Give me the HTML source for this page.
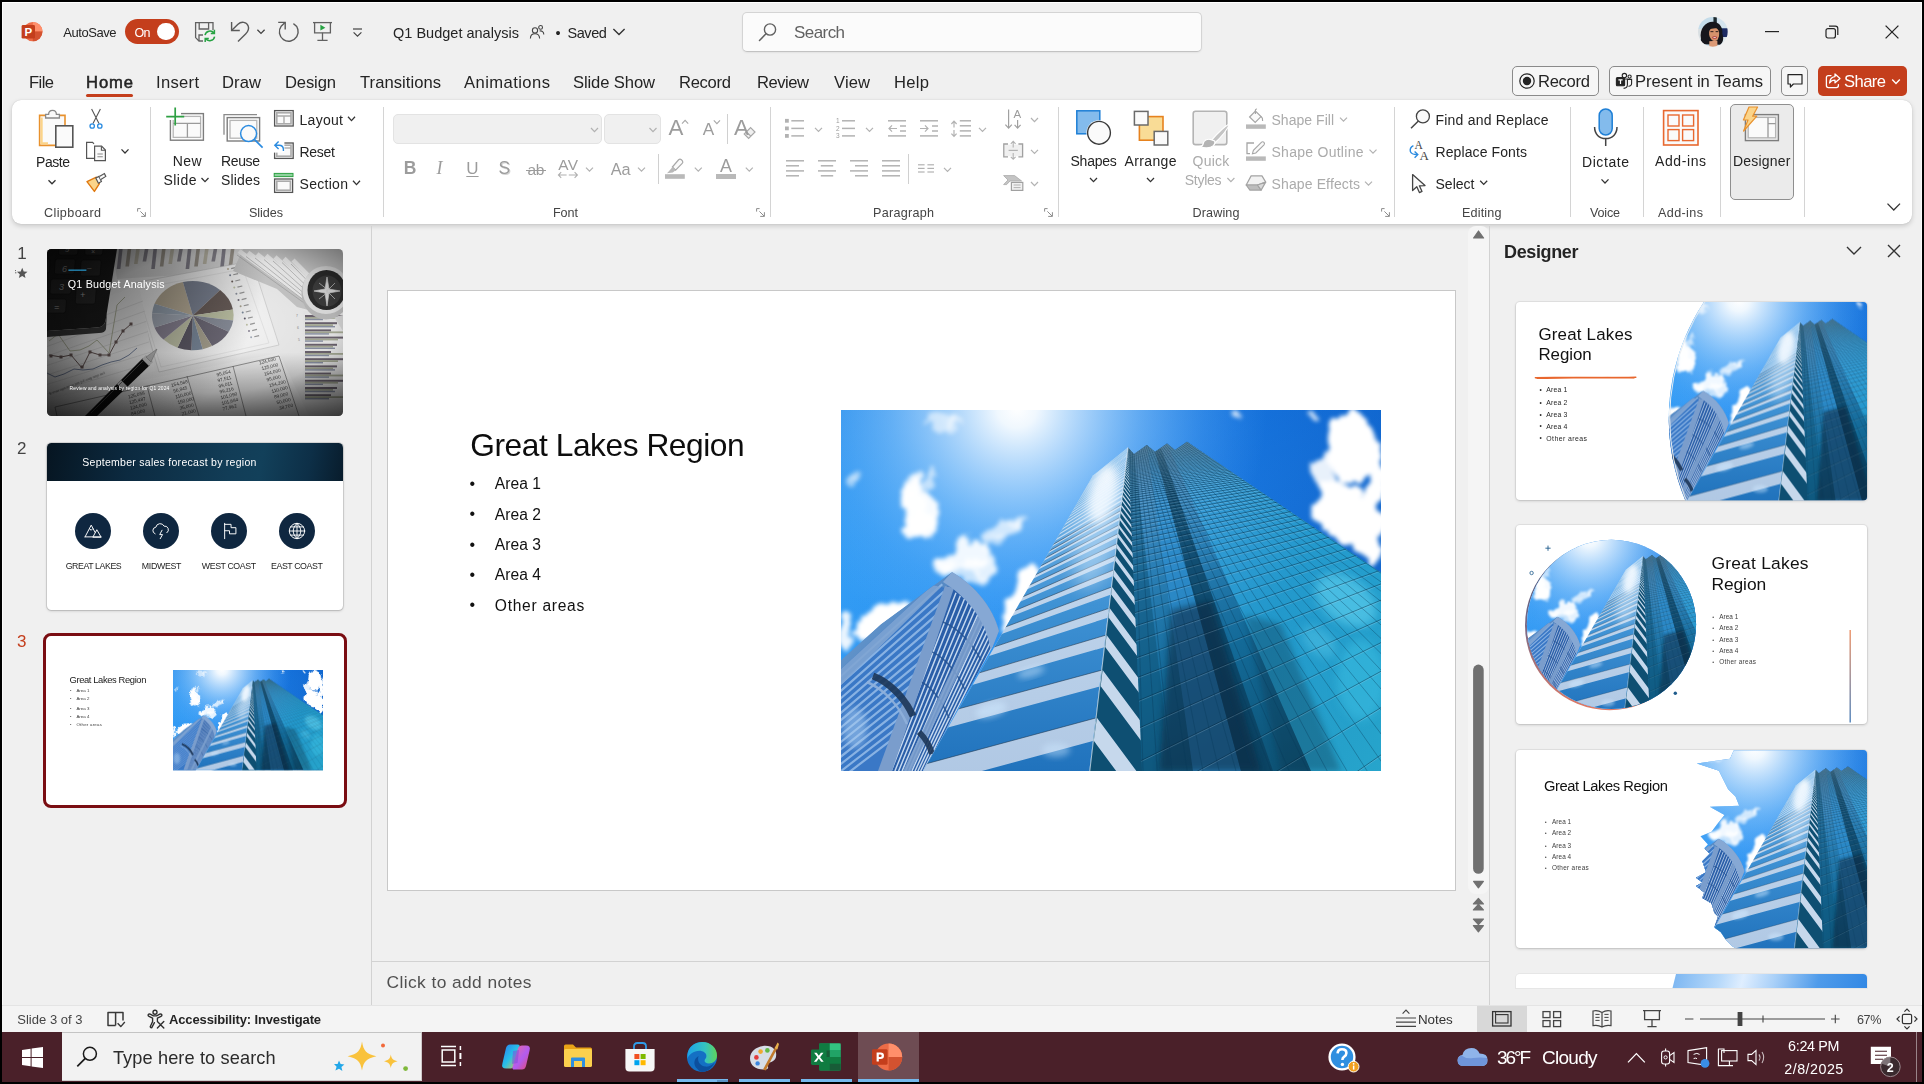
<!DOCTYPE html>
<html lang="en"><head><meta charset="utf-8"><title>Q1 Budget analysis - PowerPoint</title>
<style>
*{box-sizing:border-box;margin:0;padding:0}
html,body{width:1924px;height:1084px;overflow:hidden;background:#000}
body{font-family:"Liberation Sans",sans-serif;color:#242424;position:relative}
#app{position:absolute;left:2px;top:2px;width:1920px;height:1080px;background:#f0f0f0;overflow:hidden}
#root{position:absolute;left:-2px;top:-2px;width:1924px;height:1084px}
.a{position:absolute}
.t{position:absolute;white-space:nowrap;line-height:1;}
svg{position:absolute;overflow:visible}
.sep{position:absolute;width:1px;background:#d6d6d6}
.dis{color:#a6a6a6}
</style></head><body>
<div id="app"><div id="root">
<!-- photo symbol -->
<svg width="0" height="0" style="position:absolute;left:0;top:0"><defs>
<linearGradient id="pSky" x1="0" y1="0" x2="1" y2="0.25"><stop offset="0" stop-color="#36a0f6"/><stop offset="0.45" stop-color="#2890f0"/><stop offset="0.7" stop-color="#1a78e0"/><stop offset="1" stop-color="#1266cc"/></linearGradient>
<linearGradient id="pSkyV" x1="0" y1="0" x2="0" y2="1"><stop offset="0" stop-color="#0a62d0" stop-opacity=".28"/><stop offset=".5" stop-color="#1f86e8" stop-opacity="0"/><stop offset="1" stop-color="#7cc4ff" stop-opacity=".35"/></linearGradient>
<radialGradient id="pSun" cx="176" cy="-2" r="250" gradientUnits="userSpaceOnUse"><stop offset="0" stop-color="#fff" stop-opacity="1"/><stop offset=".08" stop-color="#f6fbff" stop-opacity=".97"/><stop offset=".25" stop-color="#cfe8ff" stop-opacity=".8"/><stop offset=".5" stop-color="#9fd2ff" stop-opacity=".5"/><stop offset=".75" stop-color="#7cc0ff" stop-opacity=".22"/><stop offset="1" stop-color="#6bb8ff" stop-opacity="0"/></radialGradient>
<filter id="pCl" x="-30%" y="-30%" width="160%" height="160%"><feTurbulence type="fractalNoise" baseFrequency="0.045" numOctaves="3" seed="7" result="n"/><feDisplacementMap in="SourceGraphic" in2="n" scale="26" xChannelSelector="R" yChannelSelector="G"/><feGaussianBlur stdDeviation="2"/></filter>
<linearGradient id="pLeftGlass" x1="0" y1="0" x2="0" y2="1"><stop offset="0" stop-color="#8fc4ee"/><stop offset=".3" stop-color="#3f92d4"/><stop offset=".65" stop-color="#1d6fba"/><stop offset="1" stop-color="#1a62a8"/></linearGradient>
<linearGradient id="pLeftWhite" x1="0" y1="0" x2="0" y2="1"><stop offset="0" stop-color="#cfe6fa"/><stop offset=".5" stop-color="#bcd2ea"/><stop offset="1" stop-color="#b0c8e4"/></linearGradient>
<linearGradient id="pRight" x1="0.2" y1="0" x2="0.75" y2="1"><stop offset="0" stop-color="#4f93c8"/><stop offset=".3" stop-color="#2a7fb6"/><stop offset=".6" stop-color="#136a98"/><stop offset="1" stop-color="#0c4f70"/></linearGradient>
<linearGradient id="pRightLite" x1="0" y1="0" x2="1" y2="1"><stop offset="0" stop-color="#3f9fe0"/><stop offset=".5" stop-color="#25a0d4"/><stop offset="1" stop-color="#2bb4dc"/></linearGradient>
<linearGradient id="pLB" x1="0" y1="0" x2="1" y2="1"><stop offset="0" stop-color="#6f9fd0"/><stop offset=".5" stop-color="#4d82c0"/><stop offset="1" stop-color="#2f64a6"/></linearGradient>
<filter id="pB3" x="-30%" y="-30%" width="160%" height="160%"><feGaussianBlur stdDeviation="3"/></filter>
<filter id="pB5" x="-30%" y="-30%" width="160%" height="160%"><feGaussianBlur stdDeviation="5"/></filter>
<filter id="pB8" x="-40%" y="-40%" width="180%" height="180%"><feGaussianBlur stdDeviation="9"/></filter>
<clipPath id="pClip"><rect width="540" height="361"/></clipPath>
<clipPath id="pLF"><path d="M252.0 65.6 L287.0 37.5 L248.3 361.0 L82.0 361.0 Z"/></clipPath>
<clipPath id="pRF"><path d="M287 37.5 L293 44 L305.8 35 L314 41.7 L326 33.4 L334 40 L346 31.7 L540 162.5 L540 361 L248.3 361 Z"/></clipPath>
<clipPath id="pLBc"><path d="M0 250 L40 214 L111 162 C135 176 152 198 158 221 L152 236 L82 361 L0 361 Z"/></clipPath>
</defs>
<symbol id="ph" viewBox="0 0 540 361" preserveAspectRatio="none"><g clip-path="url(#pClip)">
<rect width="540" height="361" fill="url(#pSky)"/><rect width="540" height="361" fill="url(#pSkyV)"/><rect width="540" height="361" fill="url(#pSun)"/>
<g filter="url(#pCl)"><ellipse cx="78" cy="100" rx="17" ry="30" fill="#fff" opacity="0.95" transform="rotate(-8 78 100)"/><ellipse cx="80" cy="118" rx="17" ry="13" fill="#fff" opacity="0.95" transform="rotate(0 80 118)"/><ellipse cx="74" cy="76" rx="9" ry="11" fill="#fff" opacity="0.8" transform="rotate(0 74 76)"/><ellipse cx="90" cy="70" rx="6" ry="8" fill="#fff" opacity="0.6" transform="rotate(0 90 70)"/><ellipse cx="70" cy="96" rx="12" ry="16" fill="#fff" opacity="0.9" transform="rotate(0 70 96)"/><ellipse cx="122" cy="148" rx="28" ry="14" fill="#fff" opacity="0.92" transform="rotate(-22 122 148)"/><ellipse cx="104" cy="160" rx="12" ry="10" fill="#fff" opacity="0.85" transform="rotate(0 104 160)"/><ellipse cx="140" cy="156" rx="14" ry="9" fill="#fff" opacity="0.85" transform="rotate(-10 140 156)"/><ellipse cx="128" cy="166" rx="14" ry="6" fill="#fff" opacity="0.7" transform="rotate(0 128 166)"/><ellipse cx="160" cy="120" rx="22" ry="7" fill="#fff" opacity="0.7" transform="rotate(-22 160 120)"/><ellipse cx="176" cy="112" rx="9" ry="7" fill="#fff" opacity="0.65" transform="rotate(0 176 112)"/><ellipse cx="150" cy="132" rx="12" ry="5" fill="#fff" opacity="0.55" transform="rotate(-25 150 132)"/><ellipse cx="98" cy="12" rx="16" ry="7" fill="#fff" opacity="0.55" transform="rotate(10 98 12)"/><ellipse cx="110" cy="18" rx="6" ry="8" fill="#fff" opacity="0.45" transform="rotate(0 110 18)"/><ellipse cx="12" cy="74" rx="5" ry="8" fill="#fff" opacity="0.5" transform="rotate(0 12 74)"/><ellipse cx="16" cy="68" rx="3" ry="4" fill="#fff" opacity="0.5" transform="rotate(0 16 68)"/><ellipse cx="186" cy="172" rx="11" ry="14" fill="#fff" opacity="1" transform="rotate(20 186 172)"/><ellipse cx="176" cy="196" rx="13" ry="20" fill="#fff" opacity="1" transform="rotate(20 176 196)"/><ellipse cx="168" cy="214" rx="10" ry="10" fill="#fff" opacity="1" transform="rotate(0 168 214)"/><ellipse cx="44" cy="206" rx="24" ry="12" fill="#fff" opacity="1" transform="rotate(-25 44 206)"/><ellipse cx="26" cy="222" rx="16" ry="12" fill="#fff" opacity="1" transform="rotate(-25 26 222)"/><ellipse cx="3" cy="224" rx="6" ry="18" fill="#fff" opacity="0.9" transform="rotate(0 3 224)"/><ellipse cx="64" cy="196" rx="8" ry="6" fill="#fff" opacity="0.8" transform="rotate(0 64 196)"/><ellipse cx="396" cy="5" rx="8" ry="4" fill="#fff" opacity="0.8" transform="rotate(0 396 5)"/><ellipse cx="472" cy="8" rx="7" ry="4" fill="#fff" opacity="0.8" transform="rotate(0 472 8)"/><ellipse cx="510" cy="36" rx="24" ry="38" fill="#fff" opacity="1" transform="rotate(0 510 36)"/><ellipse cx="498" cy="104" rx="24" ry="34" fill="#fff" opacity="1" transform="rotate(-15 498 104)"/><ellipse cx="527" cy="118" rx="16" ry="40" fill="#fff" opacity="1" transform="rotate(0 527 118)"/><ellipse cx="484" cy="70" rx="9" ry="28" fill="#fff" opacity="0.9" transform="rotate(0 484 70)"/><ellipse cx="536" cy="60" rx="10" ry="30" fill="#fff" opacity="1" transform="rotate(0 536 60)"/></g>
<g clip-path="url(#pLBc)"><path d="M0 250 L40 214 L111 162 C135 176 152 198 158 221 L152 236 L82 361 L0 361 Z" fill="url(#pLB)"/>
<path d="M0 259 L91.5 175 L109 179 L42.8 361 L0 361 Z" fill="#3a78c6"/>
<path d="M-10.0 275.2 L101.3 174.3 M-10.0 282.4 L102.6 181.7 M-10.0 289.6 L103.9 189.0 M-10.0 296.8 L105.2 196.4 M-10.0 304.0 L106.5 203.7 M-10.0 311.2 L107.8 211.1 M-10.0 318.4 L109.1 218.4 M-10.0 325.6 L110.4 225.8 M-10.0 332.8 L111.7 233.1 M-10.0 340.0 L113.0 240.4 M-10.0 347.2 L114.3 247.8 M-10.0 354.4 L115.6 255.1 M-10.0 361.6 L116.8 262.5 M-10.0 368.8 L118.1 269.8 M-10.0 376.0 L119.4 277.2" stroke="#9cc0ea" stroke-width="2.2" opacity=".8" fill="none"/>
<path d="M0 259 L91.5 175 L100 177 L0 275 Z" fill="#7fa4d2" opacity=".9"/>
<path d="M106 176 C132 186 148 210 152 236 L82 361 L44 361 Z" fill="#2a5ea8"/>
<path d="M110.6 179.8 L42.6 361 M115.0 182.8 L46.4 361 M119.3 185.8 L50.2 361 M123.4 189.0 L53.9 361 M127.2 192.3 L57.6 361 M130.9 195.8 L61.1 361 M134.2 199.5 L64.5 361 M137.3 203.4 L67.8 361 M140.0 207.5 L70.9 361 M142.5 211.9 L74.0 361 M144.7 216.4 L76.9 361 M146.6 221.1 L79.7 361 M148.3 226.0 L82.5 361 M149.9 231.0 L85.3 361 M151.4 236.0 L88.1 361" stroke="#d4e4f6" stroke-width="1.5" opacity=".9" fill="none"/>
<path d="M96 210 C112 214 128 228 140 250 M86 240 C100 244 114 258 124 280 M76 270 C88 274 100 288 108 308" stroke="#23508f" stroke-width="1.6" fill="none" opacity=".8"/>
<path d="M104 176 L113 178 L51 361 L37 361 Z" fill="#7a9dcc"/>
<path d="M138 204 L144 210 L70 361 L62 361 Z" fill="#7a9dcc" opacity=".9"/>
<path d="M32 266 C48 272 64 288 72 306" stroke="#1d3658" stroke-width="7" fill="none" opacity=".9"/>
<path d="M78 322 C84 328 89 336 91 344" stroke="#1d3658" stroke-width="6" fill="none" opacity=".9"/>
<path d="M26 272 C44 280 58 296 66 314" stroke="#8fb0da" stroke-width="2.5" fill="none" opacity=".9"/>
<ellipse cx="14" cy="318" rx="12" ry="20" fill="#a9cdf2" opacity=".5" filter="url(#pB3)"/>
<path d="M112 161 C138 174 154 198 159 222 L150 242 C147 216 131 190 102 172 Z" fill="#86a8d4"/>
</g>
<g clip-path="url(#pLF)"><rect x="60" y="30" width="240" height="340" fill="url(#pLeftWhite)"/>
<path d="M241.9 411.8 L-12.0 480.4 L-60.3 564.2 L232.1 485.3 Z M252.8 330.8 L41.2 387.9 L11.0 440.4 L246.7 376.8 Z M259.7 276.2 L77.1 325.6 L56.3 361.6 L255.9 307.7 Z M264.2 237.0 L101.6 283.3 L87.8 306.9 L261.6 259.9 Z M267.6 207.5 L118.3 255.5 L108.6 271.7 L265.6 224.9 Z M270.2 184.4 L130.9 234.7 L123.4 247.0 L268.6 198.1 Z M272.3 165.9 L141.1 218.1 L135.0 228.0 L271.1 176.9 Z M274.1 150.7 L149.5 204.5 L144.5 212.7 L273.0 159.8 Z M275.5 138.0 L156.7 193.0 L152.4 199.9 L274.6 145.6 Z M276.7 127.3 L162.9 183.1 L159.1 189.1 L276.0 133.7 Z M277.8 118.0 L168.3 174.4 L165.0 179.6 L277.2 123.6 Z M278.7 110.0 L173.1 166.7 L170.2 171.4 L278.1 114.9 Z M279.5 103.0 L177.3 159.9 L174.7 164.1 L279.0 107.3 Z M280.2 96.8 L181.2 153.8 L178.9 157.5 L279.8 100.6 Z M280.8 91.3 L184.7 148.2 L182.6 151.6 L280.5 94.7 Z M281.4 86.4 L187.9 143.1 L185.9 146.2 L281.1 89.4 Z M281.9 81.9 L190.8 138.5 L189.0 141.3 L281.6 84.6 Z M282.4 77.9 L193.5 134.2 L191.8 136.8 L282.1 80.4 Z M282.8 74.3 L195.9 130.2 L194.4 132.6 L282.5 76.5 Z M283.2 70.9 L198.2 126.6 L196.8 128.8 L282.9 73.0 Z M283.5 67.9 L200.4 123.2 L199.1 125.2 L283.3 69.7 Z M283.9 65.0 L202.3 120.0 L201.1 121.9 L283.7 66.8 Z M284.1 62.4 L204.2 117.0 L203.1 118.8 L284.0 64.0 Z M284.4 60.0 L205.9 114.2 L204.9 115.9 L284.3 61.5 Z M284.7 57.8 L207.6 111.6 L206.6 113.2 L284.5 59.1 Z M284.9 55.7 L209.1 109.1 L208.2 110.7 L284.8 57.0 Z M285.1 53.7 L210.6 106.8 L209.7 108.3 L285.0 54.9 Z M285.4 51.9 L211.9 104.6 L211.1 106.0 L285.2 53.0 Z M285.5 50.2 L213.2 102.6 L212.4 103.8 L285.4 51.3 Z M285.7 48.6 L214.5 100.6 L213.7 101.8 L285.6 49.6 Z M285.9 47.1 L215.6 98.7 L214.9 99.9 L285.8 48.0 Z M286.1 45.7 L216.7 96.9 L216.1 98.0 L286.0 46.5 Z M286.2 44.3 L217.8 95.2 L217.1 96.3 L286.1 45.1 Z M286.4 43.0 L218.8 93.6 L218.2 94.6 L286.3 43.8 Z M286.5 41.8 L219.8 92.1 L219.2 93.0 L286.4 42.6 Z M286.6 40.7 L220.7 90.6 L220.1 91.5 L286.6 41.4 Z M286.8 39.6 L221.5 89.2 L221.0 90.1 L286.7 40.3 Z M286.9 38.6 L222.4 87.9 L221.9 88.7 L286.8 39.2 Z M287.0 37.6 L223.2 86.6 L222.7 87.4 L286.9 38.2 Z M287.1 36.6 L224.0 85.3 L223.5 86.1 L287.0 37.2 Z M287.2 35.7 L224.7 84.1 L224.2 84.9 L287.1 36.3 Z" fill="url(#pLeftGlass)"/>
<path d="M232.1 485.3 L-60.3 564.2 M246.7 376.8 L11.0 440.4 M255.9 307.7 L56.3 361.6 M261.6 259.9 L87.8 306.9 M265.6 224.9 L108.6 271.7 M268.6 198.1 L123.4 247.0 M271.1 176.9 L135.0 228.0 M273.0 159.8 L144.5 212.7 M274.6 145.6 L152.4 199.9 M276.0 133.7 L159.1 189.1 M277.2 123.6 L165.0 179.6 M278.1 114.9 L170.2 171.4 M279.0 107.3 L174.7 164.1 M279.8 100.6 L178.9 157.5 M280.5 94.7 L182.6 151.6" stroke="#22384e" stroke-width=".8" opacity=".7" fill="none"/>
<ellipse cx="150" cy="300" rx="16" ry="7" fill="#cfe8ff" opacity=".55" filter="url(#pB3)" transform="rotate(-16 150 300)"/><ellipse cx="190" cy="262" rx="14" ry="5" fill="#cfe8ff" opacity=".5" filter="url(#pB3)" transform="rotate(-16 190 262)"/><ellipse cx="215" cy="340" rx="14" ry="7" fill="#cfe8ff" opacity=".45" filter="url(#pB3)"/>
<ellipse cx="262" cy="84" rx="13" ry="30" fill="#fff" opacity=".9" filter="url(#pB5)" transform="rotate(14 262 84)"/>
<ellipse cx="258" cy="120" rx="22" ry="60" fill="#dff0ff" opacity=".45" filter="url(#pB8)" transform="rotate(14 258 120)"/>
</g>
<g clip-path="url(#pRF)"><path d="M287 37.5 L293 44 L305.8 35 L314 41.7 L326 33.4 L334 40 L346 31.7 L540 162.5 L540 361 L248.3 361 Z" fill="url(#pRight)"/>
<path d="M326 33.4 L334 40 L346 31.7 L540 162.5 L540 361 L470 361 Z" fill="url(#pRightLite)" opacity=".85"/>
<path d="M305.8 35 L314 41.7 L400 361 L352 361 Z" fill="#2d8fd0" opacity=".7"/>
<path d="M314 41.7 L320 38 L432 361 L400 361 Z" fill="#0b3f5e" opacity=".75"/>
<path d="M287 37.5 L293 44 L330 361 L248.8 361 Z" fill="#0f5478" opacity=".55"/>
<path d="M330 200 L370 190 L420 361 L318 361 Z" fill="#07283c" opacity=".55" filter="url(#pB3)"/>
<path d="M404 205 L440 214 L500 361 L440 361 Z" fill="#0a3048" opacity=".35" filter="url(#pB3)"/>
<ellipse cx="505" cy="190" rx="34" ry="22" fill="#62d2f0" opacity=".6" filter="url(#pB5)" transform="rotate(35 505 190)"/><ellipse cx="520" cy="270" rx="24" ry="40" fill="#3cc0e4" opacity=".5" filter="url(#pB5)"/><ellipse cx="478" cy="232" rx="20" ry="12" fill="#58c8ea" opacity=".45" filter="url(#pB5)" transform="rotate(40 478 232)"/>
<path d="M205.8 680.6 L545.0 405.0 M221.1 566.7 L545.0 341.4 M232.1 485.3 L545.0 294.6 M240.3 424.2 L545.0 258.6 M246.7 376.8 L545.0 230.2 M251.8 338.8 L545.0 207.2 M255.9 307.7 L545.0 188.1 M259.0 281.8 L545.0 172.0 M261.6 259.9 L545.0 158.2 M263.7 241.1 L545.0 146.3 M265.6 224.9 L545.0 136.0 M267.2 210.6 L545.0 126.9 M268.6 198.1 L545.0 118.9 M269.9 186.9 L545.0 111.7 M271.1 176.9 L545.0 105.3 M272.1 167.9 L545.0 99.4 M273.0 159.8 L545.0 94.2 M273.9 152.4 L545.0 89.4 M274.6 145.6 L545.0 85.0 M275.3 139.4 L545.0 80.9 M276.0 133.7 L545.0 77.2 M276.6 128.5 L545.0 73.8 M277.2 123.6 L545.0 70.6 M277.7 119.1 L545.0 67.6 M278.1 114.9 L545.0 64.9 M278.6 110.9 L545.0 62.3 M279.0 107.3 L545.0 59.9 M279.4 103.8 L545.0 57.6 M279.8 100.6 L545.0 55.5 M280.1 97.5 L545.0 53.5 M280.5 94.7 L545.0 51.6 M280.8 91.9 L545.0 49.8 M281.1 89.4 L545.0 48.1 M281.3 86.9 L545.0 46.5 M281.6 84.6 L545.0 45.0 M281.9 82.5 L545.0 43.5 M282.1 80.4 L545.0 42.1 M282.3 78.4 L545.0 40.8 M282.5 76.5 L545.0 39.6 M282.7 74.7 L545.0 38.4 M282.9 73.0 L545.0 37.2 M283.1 71.3 L545.0 36.1 M283.3 69.7 L545.0 35.1 M283.5 68.2 L545.0 34.1 M283.7 66.8 L545.0 33.1 M283.8 65.4 L545.0 32.2 M284.0 64.0 L545.0 31.3 M284.1 62.7 L545.0 30.4 M284.3 61.5 L545.0 29.6 M284.4 60.3 L545.0 28.8 M284.5 59.1 L545.0 28.0 M284.7 58.0 L545.0 27.3 M284.8 57.0 L545.0 26.6 M284.9 55.9 L545.0 25.9 M285.0 54.9 L545.0 25.2 M285.1 54.0 L545.0 24.6 M285.2 53.0 L545.0 23.9 M285.3 52.1 L545.0 23.3 M285.4 51.3 L545.0 22.7 M285.5 50.4 L545.0 22.2 M285.6 49.6 L545.0 21.6 M285.7 48.8 L545.0 21.1 M285.8 48.0 L545.0 20.6 M285.9 47.3 L545.0 20.1 M286.0 46.5 L545.0 19.6 M286.0 45.8 L545.0 19.1 M286.1 45.1 L545.0 18.7 M286.2 44.5 L545.0 18.2 M286.3 43.8 L545.0 17.8 M286.3 43.2 L545.0 17.3 M286.4 42.6 L545.0 16.9 M286.5 42.0 L545.0 16.5 M286.6 41.4 L545.0 16.1 M286.6 40.8 L545.0 15.8 M286.7 40.3 L545.0 15.4 M286.7 39.7 L545.0 15.0 M286.8 39.2 L545.0 14.7 M286.9 38.7 L545.0 14.3 M286.9 38.2 L545.0 14.0 M287.0 37.7 L545.0 13.7 M287.0 37.2 L545.0 13.3 M287.1 36.7 L545.0 13.0 M287.1 36.3 L545.0 12.7" stroke="#06283e" stroke-width=".9" opacity=".5" fill="none"/>
<path d="M205.8 681.6 L545.0 406.0 M221.1 567.7 L545.0 342.4 M232.1 486.3 L545.0 295.6 M240.3 425.2 L545.0 259.6 M246.7 377.8 L545.0 231.2 M251.8 339.8 L545.0 208.2 M255.9 308.7 L545.0 189.1 M259.0 282.8 L545.0 173.0 M261.6 260.9 L545.0 159.2 M263.7 242.1 L545.0 147.3 M265.6 225.9 L545.0 137.0 M267.2 211.6 L545.0 127.9 M268.6 199.1 L545.0 119.9 M269.9 187.9 L545.0 112.7 M271.1 177.9 L545.0 106.3 M272.1 168.9 L545.0 100.4 M273.0 160.8 L545.0 95.2 M273.9 153.4 L545.0 90.4 M274.6 146.6 L545.0 86.0 M275.3 140.4 L545.0 81.9 M276.0 134.7 L545.0 78.2 M276.6 129.5 L545.0 74.8 M277.2 124.6 L545.0 71.6 M277.7 120.1 L545.0 68.6 M278.1 115.9 L545.0 65.9 M278.6 111.9 L545.0 63.3 M279.0 108.3 L545.0 60.9 M279.4 104.8 L545.0 58.6 M279.8 101.6 L545.0 56.5 M280.1 98.5 L545.0 54.5 M280.5 95.7 L545.0 52.6 M280.8 92.9 L545.0 50.8 M281.1 90.4 L545.0 49.1 M281.3 87.9 L545.0 47.5 M281.6 85.6 L545.0 46.0 M281.9 83.5 L545.0 44.5 M282.1 81.4 L545.0 43.1 M282.3 79.4 L545.0 41.8 M282.5 77.5 L545.0 40.6 M282.7 75.7 L545.0 39.4 M282.9 74.0 L545.0 38.2 M283.1 72.3 L545.0 37.1 M283.3 70.7 L545.0 36.1 M283.5 69.2 L545.0 35.1 M283.7 67.8 L545.0 34.1 M283.8 66.4 L545.0 33.2 M284.0 65.0 L545.0 32.3 M284.1 63.7 L545.0 31.4 M284.3 62.5 L545.0 30.6 M284.4 61.3 L545.0 29.8 M284.5 60.1 L545.0 29.0 M284.7 59.0 L545.0 28.3 M284.8 58.0 L545.0 27.6 M284.9 56.9 L545.0 26.9 M285.0 55.9 L545.0 26.2 M285.1 55.0 L545.0 25.6 M285.2 54.0 L545.0 24.9 M285.3 53.1 L545.0 24.3 M285.4 52.3 L545.0 23.7 M285.5 51.4 L545.0 23.2 M285.6 50.6 L545.0 22.6 M285.7 49.8 L545.0 22.1 M285.8 49.0 L545.0 21.6 M285.9 48.3 L545.0 21.1 M286.0 47.5 L545.0 20.6 M286.0 46.8 L545.0 20.1 M286.1 46.1 L545.0 19.7 M286.2 45.5 L545.0 19.2 M286.3 44.8 L545.0 18.8 M286.3 44.2 L545.0 18.3 M286.4 43.6 L545.0 17.9 M286.5 43.0 L545.0 17.5 M286.6 42.4 L545.0 17.1 M286.6 41.8 L545.0 16.8 M286.7 41.3 L545.0 16.4 M286.7 40.7 L545.0 16.0 M286.8 40.2 L545.0 15.7 M286.9 39.7 L545.0 15.3 M286.9 39.2 L545.0 15.0 M287.0 38.7 L545.0 14.7 M287.0 38.2 L545.0 14.3 M287.1 37.7 L545.0 14.0 M287.1 37.3 L545.0 13.7" stroke="#bfe4f4" stroke-width=".6" opacity=".35" fill="none"/>
<path d="M292 -3 L250.0 361 M292 -3 L262.2 361 M292 -3 L275.0 361 M292 -3 L288.2 361 M292 -3 L302.0 361 M292 -3 L316.2 361 M292 -3 L331.0 361 M292 -3 L346.2 361 M292 -3 L362.0 361 M292 -3 L378.2 361 M292 -3 L395.0 361 M292 -3 L412.2 361 M292 -3 L430.0 361 M292 -3 L448.2 361 M292 -3 L467.0 361 M292 -3 L486.2 361 M292 -3 L506.0 361 M292 -3 L526.2 361 M292 -3 L547.0 361 M292 -3 L568.2 361 M292 -3 L590.0 361 M292 -3 L612.2 361 M292 -3 L635.0 361 M292 -3 L658.2 361 M292 -3 L682.0 361 M292 -3 L706.2 361 M292 -3 L731.0 361 M292 -3 L756.2 361 M292 -3 L782.0 361 M292 -3 L808.2 361 M292 -3 L835.0 361 M292 -3 L862.2 361 M292 -3 L890.0 361 M292 -3 L918.2 361" stroke="#0a3a58" stroke-width=".7" opacity=".5" fill="none"/>
<clipPath id="pFc"><path d="M287 37.5 L248.3 361 L301 361 Z"/></clipPath>
<g clip-path="url(#pFc)"><path d="M287 37.5 L248.3 361 L301 361 Z" fill="#0e4f72"/>
<path d="M246.7 376.8 L241.9 411.8 L301.9 492.8 L306.7 457.8 Z M255.9 307.7 L252.8 330.8 L312.8 411.8 L315.9 388.7 Z M261.6 259.9 L259.7 276.2 L319.7 357.2 L321.6 340.9 Z M265.6 224.9 L264.2 237.0 L324.2 318.0 L325.6 305.9 Z M268.6 198.1 L267.6 207.5 L327.6 288.5 L328.6 279.1 Z M271.1 176.9 L270.2 184.4 L330.2 265.4 L331.1 257.9 Z M273.0 159.8 L272.3 165.9 L332.3 246.9 L333.0 240.8 Z M274.6 145.6 L274.1 150.7 L334.1 231.7 L334.6 226.6 Z M276.0 133.7 L275.5 138.0 L335.5 219.0 L336.0 214.7 Z M277.2 123.6 L276.7 127.3 L336.7 208.3 L337.2 204.6 Z M278.1 114.9 L277.8 118.0 L337.8 199.0 L338.1 195.9 Z M279.0 107.3 L278.7 110.0 L338.7 191.0 L339.0 188.3 Z M279.8 100.6 L279.5 103.0 L339.5 184.0 L339.8 181.6 Z M280.5 94.7 L280.2 96.8 L340.2 177.8 L340.5 175.7 Z M281.1 89.4 L280.8 91.3 L340.8 172.3 L341.1 170.4 Z M281.6 84.6 L281.4 86.4 L341.4 167.4 L341.6 165.6 Z M282.1 80.4 L281.9 81.9 L341.9 162.9 L342.1 161.4 Z M282.5 76.5 L282.4 77.9 L342.4 158.9 L342.5 157.5 Z M282.9 73.0 L282.8 74.3 L342.8 155.3 L342.9 154.0 Z M283.3 69.7 L283.2 70.9 L343.2 151.9 L343.3 150.7 Z M283.7 66.8 L283.5 67.9 L343.5 148.9 L343.7 147.8 Z M284.0 64.0 L283.9 65.0 L343.9 146.0 L344.0 145.0 Z M284.3 61.5 L284.1 62.4 L344.1 143.4 L344.3 142.5 Z M284.5 59.1 L284.4 60.0 L344.4 141.0 L344.5 140.1 Z M284.8 57.0 L284.7 57.8 L344.7 138.8 L344.8 138.0 Z M285.0 54.9 L284.9 55.7 L344.9 136.7 L345.0 135.9 Z M285.2 53.0 L285.1 53.7 L345.1 134.7 L345.2 134.0 Z M285.4 51.3 L285.4 51.9 L345.4 132.9 L345.4 132.3 Z M285.6 49.6 L285.5 50.2 L345.5 131.2 L345.6 130.6 Z M285.8 48.0 L285.7 48.6 L345.7 129.6 L345.8 129.0 Z M286.0 46.5 L285.9 47.1 L345.9 128.1 L346.0 127.5 Z M286.1 45.1 L286.1 45.7 L346.1 126.7 L346.1 126.1 Z M286.3 43.8 L286.2 44.3 L346.2 125.3 L346.3 124.8 Z M286.4 42.6 L286.4 43.0 L346.4 124.0 L346.4 123.6 Z M286.6 41.4 L286.5 41.8 L346.5 122.8 L346.6 122.4 Z M286.7 40.3 L286.6 40.7 L346.6 121.7 L346.7 121.3 Z M286.8 39.2 L286.8 39.6 L346.8 120.6 L346.8 120.2 Z M286.9 38.2 L286.9 38.6 L346.9 119.6 L346.9 119.2 Z M287.0 37.2 L287.0 37.6 L347.0 118.6 L347.0 118.2 Z M287.1 36.3 L287.1 36.6 L347.1 117.6 L347.1 117.3 Z M287.2 35.4 L287.2 35.7 L347.2 116.7 L347.2 116.4 Z" fill="#c6d8ec"/>
</g>
</g>
<path d="M287 37.5 L248.8 361" stroke="#e8f2fb" stroke-width="1" opacity=".7"/>
</g></symbol></svg>
<!-- window frame -->
<div class="a" style="left:2px;top:2px;width:1920px;height:1px;background:#fff"></div>
<div class="a" style="left:2px;top:2px;width:1px;height:1032px;background:#fbfbfb"></div>
<div class="a" style="left:1921px;top:2px;width:1px;height:1032px;background:#fafafa"></div>
<!-- search box -->
<div class="a" style="left:742px;top:12px;width:460px;height:40px;background:#fbfbfb;border:1px solid #d4d4d4;border-bottom-color:#c2c2c2;border-radius:5px;box-shadow:0 1px 2px rgba(0,0,0,.06)"></div>
<svg style="left:757px;top:21px" width="22" height="22" viewBox="0 0 22 22"><circle cx="13" cy="8.5" r="5.6" fill="none" stroke="#616161" stroke-width="1.4"/><path d="M9 12.7 L2.5 19.5" stroke="#616161" stroke-width="1.5" stroke-linecap="round"/></svg>
<!-- autosave toggle -->
<div class="a" style="left:125px;top:19px;width:54px;height:25px;border-radius:13px;background:#c43e1c"></div>
<div class="a" style="left:157px;top:22.8px;width:17.6px;height:17.6px;border-radius:50%;background:#fff"></div>
<!-- home underline -->
<div class="a" style="left:86px;top:94px;width:47px;height:3px;border-radius:2px;background:#c43e1c"></div>
<!-- right buttons -->
<div class="a" style="left:1512px;top:66px;width:87px;height:30px;border:1px solid #8a8a8a;border-radius:5px;background:#f6f6f6"></div>
<div class="a" style="left:1609px;top:66px;width:162px;height:30px;border:1px solid #8a8a8a;border-radius:5px;background:#f6f6f6"></div>
<div class="a" style="left:1781px;top:66px;width:27px;height:30px;border:1px solid #8a8a8a;border-radius:5px;background:#f6f6f6"></div>
<div class="a" style="left:1818px;top:66px;width:89px;height:30px;border-radius:5px;background:#c43e1c"></div>
<!-- ribbon panel -->
<div class="a" style="left:12px;top:100px;width:1900.3px;height:124px;background:#fff;border-radius:9px;box-shadow:0 2px 5px rgba(0,0,0,.17),0 0 1px rgba(0,0,0,.18)"></div>
<!-- pane separators -->
<div class="a" style="left:371px;top:226px;width:1px;height:779px;background:#d2d2d2"></div>
<div class="a" style="left:1489px;top:226px;width:1px;height:779px;background:#d2d2d2"></div>
<div class="a" style="left:372px;top:961px;width:1117px;height:1px;background:#d2d2d2"></div>
<!-- status bar -->
<div class="a" style="left:2px;top:1004.5px;width:1920px;height:28px;background:#f4f4f4;border-top:1px solid #e4e4e4"></div>
<div class="a" style="left:1477px;top:1005.5px;width:50px;height:26.5px;background:#d8d8d8"></div>
<!-- taskbar -->
<div class="a" style="left:2px;top:1032px;width:1920px;height:50px;background:#4a2029"></div>
<div class="a" style="left:62px;top:1032px;width:360px;height:49.4px;background:#f2f2f2;border-top:1px solid #c4c4c4;border-bottom:1px solid #cfcfcf;border-right:1px solid #cfc8ca"></div>
<div class="a" style="left:858px;top:1032px;width:61px;height:50px;background:#6e4c53"></div>
<div class="a" style="left:676.6px;top:1079.4px;width:51.4px;height:2.6px;background:#76b9ed"></div>
<div class="a" style="left:739px;top:1079.4px;width:51.4px;height:2.6px;background:#76b9ed"></div>
<div class="a" style="left:801px;top:1079.4px;width:51px;height:2.6px;background:#76b9ed"></div>
<div class="a" style="left:858px;top:1079.4px;width:61px;height:2.6px;background:#76b9ed"></div>
<div class="a" style="left:1916px;top:1032px;width:1px;height:50px;background:#9a8489"></div>
<div class="a" style="left:1468px;top:225.5px;width:21px;height:668.5px;background:#f5f5f5;border-radius:8px"></div>
<!-- main slide -->
<div class="a" style="left:387px;top:290px;width:1069px;height:601px;background:#fff;border:1px solid #c8c8c8"></div>
<!-- title bar icons -->
<svg style="left:20px;top:20px" width="24" height="24" viewBox="0 0 24 24">
 <circle cx="12.8" cy="11.6" r="9.7" fill="#ed6c47"/>
 <path d="M12.8 1.9 A9.7 9.7 0 0 1 22.5 11.6 L12.8 11.6 Z" fill="#ff8f6b"/>
 <path d="M22.5 11.6 A9.7 9.7 0 0 1 12.8 21.3 L12.8 11.6 Z" fill="#d35230"/>
 <rect x="1.6" y="5" width="13.4" height="13.6" rx="1.4" fill="#c43e1c"/>
 <text x="8.3" y="16" font-family="Liberation Sans,sans-serif" font-weight="700" font-size="11.5" fill="#fff" text-anchor="middle">P</text>
</svg>
<!-- save -->
<svg style="left:194px;top:21px" width="23" height="22" viewBox="0 0 23 22" fill="none" stroke="#616161" stroke-width="1.3">
 <path d="M9 20 H5 L1.6 16.6 V1.6 H19 V9"/><path d="M5.2 1.6 V8 H14.6 V1.6"/><path d="M5 20 V14 H9"/>
 <path d="M11 14.2 A5 5 0 0 1 20 12.2 M20.4 8.8 V12.4 H16.8" stroke="#27a343" stroke-width="1.5"/>
 <path d="M20.6 15.6 A5 5 0 0 1 11.6 17.6 M11.2 21 V17.4 H14.8" stroke="#27a343" stroke-width="1.5"/>
</svg>
<!-- undo -->
<svg style="left:0;top:0" width="1" height="1" fill="none" stroke="#5a5a5a" stroke-width="1.4" stroke-linejoin="miter">
 <path d="M231.6 22 V30.5 H239.8"/><path d="M231.8 30.3 L238 24.2 C241.5 20.8 246.6 22 248.2 26 C249.4 29.4 247.6 32 245.6 34 L238 41.6"/>
</svg>
<svg style="left:256px;top:28px" width="10" height="8" viewBox="0 0 10 8" fill="none" stroke="#444" stroke-width="1.3"><path d="M1.4 1.8 L5 5.4 L8.6 1.8"/></svg>
<!-- redo -->
<svg style="left:0;top:0" width="1" height="1" fill="none" stroke="#5a5a5a" stroke-width="1.4">
 <path d="M278.2 22.4 H285.2 V29.4"/><path d="M285 22.6 L281.2 26.2 A9.4 9.4 0 1 0 293.4 23.6"/>
</svg>
<!-- present from beginning -->
<svg style="left:312px;top:21px" width="21" height="21" viewBox="0 0 21 21" fill="none" stroke="#616161" stroke-width="1.3">
 <path d="M1 1.6 H20"/><path d="M2.6 1.6 V11.8 H18.4 V1.6"/><path d="M10.5 11.8 V19.4 M5.4 19.4 H15.6"/>
 <path d="M8.4 3.8 L13.4 6.7 L8.4 9.6 Z" fill="#27a343" stroke="none"/>
</svg>
<!-- customize QAT -->
<svg style="left:352px;top:27px" width="11" height="11" viewBox="0 0 11 11" fill="none" stroke="#444" stroke-width="1.2"><path d="M1 2 H10"/><path d="M1.6 5.4 L5.5 9.2 L9.4 5.4"/></svg>
<!-- people icon -->
<svg style="left:529px;top:24px" width="16" height="16" viewBox="0 0 16 16" fill="none" stroke="#444" stroke-width="1.1">
 <circle cx="6" cy="6.4" r="2.6"/><path d="M1.4 14.6 C1.4 11 3.4 9.8 6 9.8 C8.6 9.8 10.6 11 10.6 14.6"/>
 <circle cx="11.6" cy="3.4" r="1.9"/><path d="M10.6 7 C13 6.6 14.8 7.8 14.8 10.4"/>
</svg>
<svg style="left:612px;top:27px" width="14" height="10" viewBox="0 0 14 10" fill="none" stroke="#333" stroke-width="1.4"><path d="M1.4 2 L7 7.6 L12.6 2"/></svg>
<!-- avatar -->
<svg style="left:1697.5px;top:17.3px" width="29.7" height="29.7" viewBox="0 0 30 30">
 <defs><clipPath id="avc"><circle cx="15" cy="15" r="15"/></clipPath><filter id="avb"><feGaussianBlur stdDeviation="0.45"/></filter></defs>
 <g clip-path="url(#avc)"><g filter="url(#avb)"><rect width="30" height="30" fill="#c4dcea"/>
 <rect x="0" y="12" width="8" height="10" fill="#d9dfe2"/>
 <rect x="15.6" y="-1" width="3.4" height="8" fill="#1d2a2e"/><rect x="19.4" y="0" width="11" height="11" fill="#d4e4ee"/>
 <rect x="23.2" y="11.4" width="8" height="9" fill="#1b2b62"/><rect x="24" y="20.4" width="7" height="6" fill="#dfe8ec"/>
 <path d="M3 22 C1 12 8 4.6 15 4.8 C22 5 25.4 11 24.6 17 C26 21 26 25 22.6 28 L4.6 27.6 C2.6 26 2.6 24 3 22Z" fill="#14171b"/>
 <path d="M11.4 31 V24.4 L19.6 24 V31Z" fill="#dc9a76"/>
 <ellipse cx="16.4" cy="17.2" rx="5.2" ry="7.2" fill="#d6926c" transform="rotate(-8 16.4 17.2)"/>
 <path d="M10.4 13.6 C12 8.6 19 7.6 22 12.6 C19 10.6 14 10.8 10.4 13.6Z" fill="#14171b"/>
 <path d="M12.6 14.8 H15.6 M17.8 14.8 H20.6" stroke="#2a1c1a" stroke-width="1"/>
 <ellipse cx="16.8" cy="20.8" rx="2.5" ry="1.3" fill="#b13c3e"/><rect x="15.6" y="20.4" width="2.4" height=".8" fill="#f4ecec"/>
 <path d="M22 12 C24.6 16 24.4 22 21.6 26 L20.4 22 C22 18 22 15 22 12Z" fill="#14171b"/></g></g>
</svg>
<!-- window controls -->
<svg style="left:1764px;top:25px" width="16" height="14" viewBox="0 0 16 14" stroke="#242424" stroke-width="1.2" fill="none"><path d="M1 6.6 H15"/></svg>
<svg style="left:1824px;top:24px" width="16" height="16" viewBox="0 0 16 16" stroke="#242424" stroke-width="1.2" fill="none"><rect x="2" y="4.6" width="9.4" height="9.4" rx="2"/><path d="M5 2.2 H11.4 Q13.8 2.2 13.8 4.6 V11"/></svg>
<svg style="left:1884px;top:24px" width="16" height="16" viewBox="0 0 16 16" stroke="#242424" stroke-width="1.3" fill="none"><path d="M1.6 1.6 L14.4 14.4 M14.4 1.6 L1.6 14.4"/></svg>
<!-- Record icon -->
<svg style="left:1518px;top:72px" width="18" height="18" viewBox="0 0 18 18"><circle cx="9" cy="9" r="7.2" fill="none" stroke="#242424" stroke-width="1.2"/><circle cx="9" cy="9" r="4.2" fill="#242424"/></svg>
<!-- Teams icon -->
<svg style="left:1615px;top:72px" width="18" height="18" viewBox="0 0 18 18" fill="none" stroke="#242424" stroke-width="1.1">
 <circle cx="9.4" cy="3.6" r="2.2"/><circle cx="14.6" cy="4.6" r="1.6"/>
 <path d="M7 7 H12.4 V12.6 C12.4 15 10.8 16.4 8.6 16.4"/><path d="M12.6 7.4 H16.6 V11.4 C16.6 13.4 15 14.4 13.4 14.2"/>
 <rect x="1.4" y="5.6" width="8.2" height="8.2" rx="1" fill="#242424"/>
 <path d="M3.4 7.8 H7.6 M5.5 7.8 V12" stroke="#fff" stroke-width="1.2"/>
</svg>
<!-- comments icon -->
<svg style="left:1786px;top:73px" width="18" height="16" viewBox="0 0 18 16" fill="none" stroke="#242424" stroke-width="1.2" stroke-linejoin="round"><path d="M2 1.6 H16 V11 H7.4 L4.4 14 V11 H2 Z"/></svg>
<!-- share icon + chevron -->
<svg style="left:1824px;top:72px" width="18" height="18" viewBox="0 0 18 18" fill="none" stroke="#fff" stroke-width="1.3" stroke-linejoin="round" stroke-linecap="round">
 <path d="M7 3.6 H4.4 Q2.4 3.6 2.4 5.6 V13.6 Q2.4 15.6 4.4 15.6 H12.4 Q14.4 15.6 14.4 13.6 V12.6"/>
 <path d="M11 2 L16 6.4 L11 10.8 V8.2 C8.4 8.2 6.8 9 5.6 11 C5.8 7.4 7.8 5 11 4.6 Z"/>
</svg>
<svg style="left:1891px;top:78px" width="10" height="8" viewBox="0 0 10 8" fill="none" stroke="#fff" stroke-width="1.4"><path d="M1.2 1.6 L5 5.4 L8.8 1.6"/></svg>
<!-- ribbon icons -->
<div class="a" style="left:150px;top:107px;width:1px;height:110px;background:#d4d4d4"></div>
<div class="a" style="left:383px;top:107px;width:1px;height:110px;background:#d4d4d4"></div>
<div class="a" style="left:770px;top:107px;width:1px;height:110px;background:#d4d4d4"></div>
<div class="a" style="left:1057.5px;top:107px;width:1px;height:110px;background:#d4d4d4"></div>
<div class="a" style="left:1394px;top:107px;width:1px;height:110px;background:#d4d4d4"></div>
<div class="a" style="left:1569.5px;top:107px;width:1px;height:110px;background:#d4d4d4"></div>
<div class="a" style="left:1642.5px;top:107px;width:1px;height:110px;background:#d4d4d4"></div>
<div class="a" style="left:1719.5px;top:107px;width:1px;height:110px;background:#d4d4d4"></div>
<div class="a" style="left:1803.5px;top:107px;width:1px;height:110px;background:#d4d4d4"></div>
<svg style="left:36px;top:107px" width="40" height="42" viewBox="0 0 40 42" >
 <path d="M3.6 8.4 H29 V38.4 H3.6 Z" fill="#fafafa" stroke="#e8912d" stroke-width="1.6"/>
 <path d="M5.6 10.4 V36.4 H12" fill="none" stroke="#fbd48a" stroke-width="2.2"/>
 <path d="M9.6 11 V7.4 H12.6 C12.6 2 20.4 2 20.4 7.4 H23.4 V11 Z" fill="#fafafa" stroke="#8a8a8a" stroke-width="1.3"/>
 <rect x="19.8" y="18.8" width="17" height="21.4" fill="#fafafa" stroke="#555" stroke-width="1.6"/></svg>
<svg style="left:0;top:0" width="1" height="1"><path d="M48.5 180.2 L52.0 183.8 L55.5 180.2" fill="none" stroke="#333" stroke-width="1.3"/></svg>
<svg style="left:88px;top:108px" width="16" height="22" viewBox="0 0 16 22" ><path d="M3.6 1 L11 15.4 M12.4 1 L5 15.4" stroke="#555" stroke-width="1.1" fill="none"/>
 <circle cx="4.2" cy="18" r="2.2" fill="none" stroke="#2a8be0" stroke-width="1.3"/><circle cx="11.8" cy="18" r="2.2" fill="none" stroke="#2a8be0" stroke-width="1.3"/></svg>
<svg style="left:85px;top:141px" width="22" height="21" viewBox="0 0 22 21" ><path d="M9 17.4 H1.6 V1.4 H7.6 L9 2.8" fill="none" stroke="#555" stroke-width="1.2"/>
 <path d="M9.6 5.2 H16.6 L20.4 9 V19.6 H9.6 Z" fill="#fafafa" stroke="#555" stroke-width="1.2"/><path d="M16.4 5.4 V9.2 H20.2" fill="none" stroke="#555" stroke-width="1.1"/>
 <path d="M12.4 13 H17.8 M12.4 15.8 H17.8" stroke="#888" stroke-width="1.1"/></svg>
<svg style="left:0;top:0" width="1" height="1"><path d="M121.5 149.4 L125.0 153 L128.5 149.4" fill="none" stroke="#333" stroke-width="1.3"/></svg>
<svg style="left:85px;top:172px" width="22" height="21" viewBox="0 0 22 21" ><path d="M2 9.6 L11.4 5.2 L14.4 11.6 L9.4 19.4 Z" fill="#fbd48a" stroke="#e0780f" stroke-width="1.4" stroke-linejoin="round"/>
 <path d="M10.8 6 L14 4.4 L16.4 9.6 L13.4 11.2 Z" fill="#fafafa" stroke="#555" stroke-width="1.2"/><path d="M14.4 4.6 L19.4 1.6 L20.8 4.4 L15.8 7.6" fill="#fafafa" stroke="#555" stroke-width="1.2"/></svg>
<svg style="left:137px;top:208px" width="9" height="9" viewBox="0 0 9 9" ><path d="M0.6 3.6 V0.6 H3.6 M8.4 4.2 V8.4 H4.2 M8.2 8.2 L3.4 3.4" fill="none" stroke="#8c8c8c" stroke-width="1"/></svg>
<svg style="left:164px;top:106px" width="44" height="38" viewBox="0 0 44 38" ><rect x="6.4" y="7.6" width="33" height="26.6" fill="none" stroke="#7d7d7d" stroke-width="1.4"/>
 <rect x="9.2" y="10.4" width="27.4" height="21" fill="#fafafa" stroke="#b5b5b5" stroke-width="1.3"/>
 <path d="M9.2 17.4 H36.6 M23.4 17.4 V31.4" stroke="#9a9a9a" stroke-width="1.3" fill="none"/>
 <rect x="1" y="0" width="16" height="14" fill="#fff"/>
 <path d="M11.2 1.6 V19.6 M2.2 10.6 H20.2" stroke="#2ea043" stroke-width="1.7" fill="none"/></svg>
<svg style="left:0;top:0" width="1" height="1"><path d="M201.5 178 L205.0 181.6 L208.5 178" fill="none" stroke="#333" stroke-width="1.3"/></svg>
<svg style="left:222px;top:106px" width="42" height="44" viewBox="0 0 42 44" ><path d="M2 28.8 V8.6 H35" fill="none" stroke="#8a8a8a" stroke-width="1.3"/>
 <rect x="5.2" y="11.6" width="32.4" height="23.4" fill="none" stroke="#7d7d7d" stroke-width="1.4"/>
 <rect x="8" y="14.4" width="26.8" height="17.8" fill="#fafafa" stroke="#b5b5b5" stroke-width="1.3"/>
 <circle cx="26.6" cy="27.6" r="8" fill="#fafafa" stroke="#2a8be0" stroke-width="1.5"/><path d="M32.4 33.4 L40.6 41.6" stroke="#2a8be0" stroke-width="1.7"/></svg>
<svg style="left:273px;top:109px" width="22" height="19" viewBox="0 0 22 19" ><rect x="1.6" y="1.6" width="18.6" height="15.4" fill="#fafafa" stroke="#555" stroke-width="1.3"/><rect x="3.8" y="3.8" width="14.2" height="11" fill="none" stroke="#ababab" stroke-width="1.6"/><path d="M4 7 H18 M11 7 V14.6" stroke="#ababab" stroke-width="1.4"/></svg>
<svg style="left:0;top:0" width="1" height="1"><path d="M348 116.8 L351.5 120.6 L355 116.8" fill="none" stroke="#333" stroke-width="1.3"/></svg>
<svg style="left:273px;top:140px" width="22" height="20" viewBox="0 0 22 20" ><rect x="1.6" y="3" width="18.6" height="15.4" fill="#fafafa" stroke="#555" stroke-width="1.3"/><rect x="3.8" y="5.2" width="14.2" height="11" fill="none" stroke="#ababab" stroke-width="1.6"/><path d="M11 8 H18" stroke="#ababab" stroke-width="1.4"/>
 <rect x="0" y="0" width="11.4" height="12.6" fill="#fff"/>
 <path d="M5.6 1.4 L1.8 5.2 L5.6 9 M2 5.2 H6 Q10.4 5.2 10.4 9.6 V11" fill="none" stroke="#2a8be0" stroke-width="1.4"/></svg>
<svg style="left:273px;top:172px" width="22" height="22" viewBox="0 0 22 22" ><rect x="1.2" y="1.4" width="18.8" height="3.2" fill="#8fd19e" stroke="#2ea043" stroke-width="1"/><rect x="1.6" y="7" width="18" height="13.4" fill="#fafafa" stroke="#555" stroke-width="1.3"/><rect x="3.8" y="9.2" width="13.6" height="9" fill="none" stroke="#ababab" stroke-width="1.6"/></svg>
<svg style="left:0;top:0" width="1" height="1"><path d="M353 180.8 L356.5 184.6 L360 180.8" fill="none" stroke="#333" stroke-width="1.3"/></svg>
<div class="a" style="left:393px;top:114px;width:209px;height:30px;background:#f0f0f0;border:1px solid #e3e3e3;border-radius:5px"></div>
<div class="a" style="left:604px;top:114px;width:57px;height:30px;background:#f0f0f0;border:1px solid #e3e3e3;border-radius:5px"></div>
<svg style="left:0;top:0" width="1" height="1"><path d="M591 128 L594.5 131.6 L598 128" fill="none" stroke="#b2b2b2" stroke-width="1.2"/></svg>
<svg style="left:0;top:0" width="1" height="1"><path d="M649.5 128 L653.0 131.6 L656.5 128" fill="none" stroke="#b2b2b2" stroke-width="1.2"/></svg>
<svg style="left:0;top:0" width="1" height="1"><path d="M682 123.6 L685.1 120.4 L688.2 123.6" fill="none" stroke="#a8a8a8" stroke-width="1.1"/></svg>
<svg style="left:0;top:0" width="1" height="1"><path d="M713.8 120.4 L716.9 123.6 L720 120.4" fill="none" stroke="#a8a8a8" stroke-width="1.1"/></svg>
<div class="a" style="left:727px;top:114px;width:1px;height:30px;background:#d0d0d0"></div>
<div class="a" style="left:657.5px;top:154px;width:1px;height:30px;background:#d0d0d0"></div>
<svg style="left:742px;top:126px" width="15" height="14" viewBox="0 0 15 14" ><path d="M8.6 1.6 L13 6 L6.6 12.4 L2.2 8 Z" fill="#f0f0f0" stroke="#a8a8a8" stroke-width="1.2"/><path d="M4.4 5.8 L8.8 10.2" stroke="#a8a8a8" stroke-width="1.2"/></svg>
<svg style="left:557px;top:171px" width="22" height="8" viewBox="0 0 22 8" ><path d="M1.4 4 H9.6 M4.2 1.2 L1.4 4 L4.2 6.8 M11.8 4 H20.4 M17.6 1.2 L20.4 4 L17.6 6.8" fill="none" stroke="#b0b0b0" stroke-width="1.1"/></svg>
<svg style="left:0;top:0" width="1" height="1"><path d="M586 167.6 L589.5 171.2 L593 167.6" fill="none" stroke="#b2b2b2" stroke-width="1.2"/></svg>
<svg style="left:0;top:0" width="1" height="1"><path d="M638 167.6 L641.5 171.2 L645 167.6" fill="none" stroke="#b2b2b2" stroke-width="1.2"/></svg>
<svg style="left:664px;top:157px" width="22" height="23" viewBox="0 0 22 23" ><rect x="1" y="17.2" width="19.8" height="4.6" fill="#b9b9b9"/>
 <path d="M8.4 10 L14.6 2.8 Q16 1.6 17.4 2.8 L18.4 3.8 Q19.4 5.2 18.2 6.4 L11.6 13.2 Z" fill="#fafafa" stroke="#a8a8a8" stroke-width="1.2"/><path d="M8.4 10 L11.6 13.2 L8.8 15.6 L3 16.2 L6.4 12.4 Z" fill="#b9b9b9"/></svg>
<svg style="left:0;top:0" width="1" height="1"><path d="M694.8 167.6 L698.3 171.2 L701.8 167.6" fill="none" stroke="#b2b2b2" stroke-width="1.2"/></svg>
<div class="a" style="left:716px;top:174.2px;width:20px;height:4.6px;background:#b9b9b9"></div>
<svg style="left:0;top:0" width="1" height="1"><path d="M745.8 167.6 L749.3 171.2 L752.8 167.6" fill="none" stroke="#b2b2b2" stroke-width="1.2"/></svg>
<svg style="left:756px;top:208px" width="9" height="9" viewBox="0 0 9 9" ><path d="M0.6 3.6 V0.6 H3.6 M8.4 4.2 V8.4 H4.2 M8.2 8.2 L3.4 3.4" fill="none" stroke="#8c8c8c" stroke-width="1"/></svg>
<svg style="left:0;top:0" width="1" height="1"><path d="M791.3 120.8 H804" stroke="#b2b2b2" stroke-width="1.5"/><path d="M791.3 128.4 H804" stroke="#b2b2b2" stroke-width="1.5"/><path d="M791.3 135.9 H804" stroke="#b2b2b2" stroke-width="1.5"/><rect x="785" y="118.89999999999999" width="3.8" height="3.8" fill="#b2b2b2"/><rect x="785" y="126.5" width="3.8" height="3.8" fill="#b2b2b2"/><rect x="785" y="134.0" width="3.8" height="3.8" fill="#b2b2b2"/><path d="M842 120.8 H855" stroke="#b2b2b2" stroke-width="1.5"/><path d="M842 128.4 H855" stroke="#b2b2b2" stroke-width="1.5"/><path d="M842 135.9 H855" stroke="#b2b2b2" stroke-width="1.5"/><path d="M888 120.8 H906" stroke="#b2b2b2" stroke-width="1.5"/><path d="M888 135.9 H906" stroke="#b2b2b2" stroke-width="1.5"/><path d="M900 126 H906" stroke="#b2b2b2" stroke-width="1.5"/><path d="M900 131 H906" stroke="#b2b2b2" stroke-width="1.5"/><path d="M889 128.5 H897 M892 125.4 L889 128.5 L892 131.6" fill="none" stroke="#b2b2b2" stroke-width="1.2"/><path d="M920 120.8 H938" stroke="#b2b2b2" stroke-width="1.5"/><path d="M920 135.9 H938" stroke="#b2b2b2" stroke-width="1.5"/><path d="M932 126 H938" stroke="#b2b2b2" stroke-width="1.5"/><path d="M932 131 H938" stroke="#b2b2b2" stroke-width="1.5"/><path d="M920 128.5 H928 M925 125.4 L928 128.5 L925 131.6" fill="none" stroke="#b2b2b2" stroke-width="1.2"/><path d="M959.8 120.8 H971" stroke="#b2b2b2" stroke-width="1.5"/><path d="M959.8 125.8 H971" stroke="#b2b2b2" stroke-width="1.5"/><path d="M959.8 130.9 H971" stroke="#b2b2b2" stroke-width="1.5"/><path d="M959.8 135.9 H971" stroke="#b2b2b2" stroke-width="1.5"/><path d="M954 121.4 V127.4 M951.4 124 L954 121.2 L956.6 124 M954 130 V136.4 M951.4 133.6 L954 136.4 L956.6 133.6" fill="none" stroke="#b2b2b2" stroke-width="1.2"/><path d="M786 160.8 H804" stroke="#b2b2b2" stroke-width="1.5"/><path d="M786 165.8 H799" stroke="#b2b2b2" stroke-width="1.5"/><path d="M786 170.9 H804" stroke="#b2b2b2" stroke-width="1.5"/><path d="M786 175.8 H799" stroke="#b2b2b2" stroke-width="1.5"/><path d="M818 160.8 H836" stroke="#b2b2b2" stroke-width="1.5"/><path d="M820.8 165.8 H833.2" stroke="#b2b2b2" stroke-width="1.5"/><path d="M818 170.9 H836" stroke="#b2b2b2" stroke-width="1.5"/><path d="M820.8 175.8 H833.2" stroke="#b2b2b2" stroke-width="1.5"/><path d="M850 160.8 H868" stroke="#b2b2b2" stroke-width="1.5"/><path d="M855 165.8 H868" stroke="#b2b2b2" stroke-width="1.5"/><path d="M850 170.9 H868" stroke="#b2b2b2" stroke-width="1.5"/><path d="M855 175.8 H868" stroke="#b2b2b2" stroke-width="1.5"/><path d="M882 160.8 H900" stroke="#b2b2b2" stroke-width="1.5"/><path d="M882 165.8 H900" stroke="#b2b2b2" stroke-width="1.5"/><path d="M882 170.9 H900" stroke="#b2b2b2" stroke-width="1.5"/><path d="M882 175.8 H900" stroke="#b2b2b2" stroke-width="1.5"/><path d="M918 164.8 H924.6" stroke="#b2b2b2" stroke-width="1.2"/><path d="M918 168.4 H924.6" stroke="#b2b2b2" stroke-width="1.2"/><path d="M918 172 H924.6" stroke="#b2b2b2" stroke-width="1.2"/><path d="M927.4 164.8 H934" stroke="#b2b2b2" stroke-width="1.2"/><path d="M927.4 168.4 H934" stroke="#b2b2b2" stroke-width="1.2"/><path d="M927.4 172 H934" stroke="#b2b2b2" stroke-width="1.2"/><path d="M1008.6 109.4 V128 M1005.4 124.6 L1008.6 128.2 L1011.8 124.6 M1017.6 120 V128 M1014.6 124.8 L1017.6 128.2 L1020.6 124.8" fill="none" stroke="#a0a0a0" stroke-width="1.2"/><rect x="1004.4" y="144.6" width="17.6" height="11.6" fill="#f0f0f0"/><path d="M1008 144 H1003.8 V156.8 H1008 M1018.4 144 H1022.6 V156.8 H1018.4" fill="none" stroke="#a0a0a0" stroke-width="1.3"/><path d="M1008.6 150.4 H1017.8" stroke="#b2b2b2" stroke-width="1.2"/><path d="M1013.2 141.6 V147.6 M1010.8 143.8 L1013.2 141.4 L1015.6 143.8 M1013.2 153 V159 M1010.8 156.8 L1013.2 159.2 L1015.6 156.8" fill="none" stroke="#b2b2b2" stroke-width="1.1"/><path d="M1003.6 175.6 H1014.6 L1021.6 181 H1010 L1006.6 184.6 L1003.6 184.6 L1008 180 Z" fill="#c4c4c4" stroke="#a8a8a8" stroke-width="0.8"/><rect x="1011.4" y="182.4" width="11.4" height="8" fill="#f0f0f0" stroke="#a0a0a0" stroke-width="1.2"/><path d="M1013.6 185 H1020.6 M1013.6 187.6 H1020.6" stroke="#b2b2b2" stroke-width="1"/></svg>
<svg style="left:0;top:0" width="1" height="1"><path d="M815 127.8 L818.5 131.4 L822 127.8" fill="none" stroke="#b2b2b2" stroke-width="1.2"/></svg>
<svg style="left:0;top:0" width="1" height="1"><path d="M866 127.8 L869.5 131.4 L873 127.8" fill="none" stroke="#b2b2b2" stroke-width="1.2"/></svg>
<svg style="left:0;top:0" width="1" height="1"><path d="M979 127.8 L982.5 131.4 L986 127.8" fill="none" stroke="#b2b2b2" stroke-width="1.2"/></svg>
<svg style="left:0;top:0" width="1" height="1"><path d="M1031 118 L1034.5 121.6 L1038 118" fill="none" stroke="#b2b2b2" stroke-width="1.2"/></svg>
<svg style="left:0;top:0" width="1" height="1"><path d="M1031 149.9 L1034.5 153.5 L1038 149.9" fill="none" stroke="#b2b2b2" stroke-width="1.2"/></svg>
<svg style="left:0;top:0" width="1" height="1"><path d="M1031 182 L1034.5 185.6 L1038 182" fill="none" stroke="#b2b2b2" stroke-width="1.2"/></svg>
<svg style="left:0;top:0" width="1" height="1"><path d="M944 167.8 L947.5 171.4 L951 167.8" fill="none" stroke="#b2b2b2" stroke-width="1.2"/></svg>
<div class="a" style="left:908px;top:154px;width:1px;height:30px;background:#d0d0d0"></div>
<svg style="left:1044px;top:208px" width="9" height="9" viewBox="0 0 9 9" ><path d="M0.6 3.6 V0.6 H3.6 M8.4 4.2 V8.4 H4.2 M8.2 8.2 L3.4 3.4" fill="none" stroke="#8c8c8c" stroke-width="1"/></svg>
<svg style="left:1074px;top:108px" width="40" height="40" viewBox="0 0 40 40" ><rect x="2.8" y="2.8" width="23" height="23" fill="#83bbec" stroke="#1e7fd6" stroke-width="1.5"/><circle cx="25" cy="24.8" r="12.6" fill="#fff"/><circle cx="25" cy="24.8" r="11.4" fill="#fafafa" stroke="#3a3a3a" stroke-width="1.4"/></svg>
<svg style="left:0;top:0" width="1" height="1"><path d="M1090 178 L1093.5 181.6 L1097 178" fill="none" stroke="#333" stroke-width="1.3"/></svg>
<svg style="left:1131px;top:108px" width="40" height="40" viewBox="0 0 40 40" ><rect x="8.4" y="8.6" width="23.6" height="23.6" fill="#f9dc96" stroke="#e6821e" stroke-width="1.6"/><rect x="3.4" y="3.4" width="13.6" height="13.6" fill="#fafafa" stroke="#6a6a6a" stroke-width="1.5"/><rect x="23.2" y="23.4" width="13.6" height="13.6" fill="#fafafa" stroke="#6a6a6a" stroke-width="1.5"/></svg>
<svg style="left:0;top:0" width="1" height="1"><path d="M1147 178 L1150.5 181.6 L1154 178" fill="none" stroke="#333" stroke-width="1.3"/></svg>
<svg style="left:1190px;top:108px" width="42" height="42" viewBox="0 0 42 42" ><rect x="3.2" y="3.2" width="33.6" height="33.4" rx="2.4" fill="#f0f0f0" stroke="#b4b4b4" stroke-width="1.6"/>
 <path d="M39.8 15.6 C34 19 27 26 21.6 32.2 L24.6 35.2 C30.6 29.6 37 22.6 39.8 15.6 Z" fill="#c4c4c4" stroke="#fff" stroke-width="1.2"/>
 <path d="M21.2 31.6 C17 30.4 13.6 32.4 13.2 35.6 C13 37.4 12 38.2 10.4 38.4 C14 40.6 20 40.6 23.4 37.6 C25 36 25.2 34 24.6 33 Z" fill="#b4b4b4" stroke="#fff" stroke-width="1.2"/></svg>
<svg style="left:0;top:0" width="1" height="1"><path d="M1227.4 178 L1230.9 181.6 L1234.4 178" fill="none" stroke="#b2b2b2" stroke-width="1.2"/></svg>
<svg style="left:1245px;top:108px" width="22" height="22" viewBox="0 0 22 22" ><rect x="1" y="16.4" width="19.8" height="4.4" fill="#b9b9b9"/><path d="M4.6 9 L10.4 3 L16 8.6 L10.2 14.4 Z" fill="#fafafa" stroke="#a6a6a6" stroke-width="1.2"/><path d="M10.4 6 V2.6 Q10.4 0.8 12 1 M16 8.6 Q18 10 17.6 13" fill="none" stroke="#a6a6a6" stroke-width="1.2"/></svg>
<svg style="left:1245px;top:140px" width="22" height="22" viewBox="0 0 22 22" ><rect x="1" y="16.4" width="19.8" height="4.4" fill="#b9b9b9"/><path d="M9 3 H2 V13.6 H5" fill="none" stroke="#a6a6a6" stroke-width="1.3"/><path d="M7.4 13.8 L8.4 10.4 L16.6 2.2 Q17.8 1.2 19 2.4 Q20 3.6 19 4.8 L10.8 13 Z" fill="#fafafa" stroke="#a6a6a6" stroke-width="1.1"/></svg>
<svg style="left:0;top:0" width="1" height="1" stroke="#a3a3a3" stroke-width="1.2" stroke-linejoin="round"><path d="M1251.1 175.9 H1262 L1265.7 182.1 L1257.5 185 H1246.2 Z" fill="#f2f2f2"/><path d="M1246.2 185 H1257.5 L1261.1 190.1 H1249.9 Z" fill="#bdbdbd"/><path d="M1257.5 185 L1265.7 182.1 L1261.1 190.1 Z" fill="#d9d9d9"/></svg>
<svg style="left:0;top:0" width="1" height="1"><path d="M1340 117.6 L1343.5 121.2 L1347 117.6" fill="none" stroke="#b2b2b2" stroke-width="1.2"/></svg>
<svg style="left:0;top:0" width="1" height="1"><path d="M1369.5 149.6 L1373.0 153.2 L1376.5 149.6" fill="none" stroke="#b2b2b2" stroke-width="1.2"/></svg>
<svg style="left:0;top:0" width="1" height="1"><path d="M1365 181.6 L1368.5 185.2 L1372 181.6" fill="none" stroke="#b2b2b2" stroke-width="1.2"/></svg>
<svg style="left:1381px;top:208px" width="9" height="9" viewBox="0 0 9 9" ><path d="M0.6 3.6 V0.6 H3.6 M8.4 4.2 V8.4 H4.2 M8.2 8.2 L3.4 3.4" fill="none" stroke="#8c8c8c" stroke-width="1"/></svg>
<svg style="left:1408px;top:108px" width="24" height="24" viewBox="0 0 24 24" ><circle cx="14.9" cy="8.4" r="6.5" fill="#fafafa" stroke="#444" stroke-width="1.3"/><path d="M10.4 13 L3 20.2" stroke="#444" stroke-width="1.5"/></svg>
<svg style="left:1408px;top:139px" width="24" height="24" viewBox="0 0 24 24" ><text x="6.4" y="10.4" font-family="Liberation Serif,serif" font-size="11.5" fill="#444">A</text><text x="11.6" y="20.6" font-family="Liberation Serif,serif" font-size="13" fill="#444">A</text>
 <path d="M5.4 6.6 Q1.4 8.6 2.4 12.6 Q3.4 15.6 9.4 15.6 M6.6 12.4 L9.8 15.6 L6.6 18.8" fill="none" stroke="#2a8be0" stroke-width="1.4"/></svg>
<svg style="left:1408px;top:172px" width="24" height="24" viewBox="0 0 24 24" ><path d="M4.6 2.6 V18.6 L8.8 14.8 L11.4 20.6 L14 19.4 L11.4 13.8 L17 13.6 Z" fill="#fafafa" stroke="#444" stroke-width="1.3" stroke-linejoin="round"/></svg>
<svg style="left:0;top:0" width="1" height="1"><path d="M1480.2 180.8 L1483.7 184.4 L1487.2 180.8" fill="none" stroke="#333" stroke-width="1.3"/></svg>
<svg style="left:1590px;top:106px" width="32" height="42" viewBox="0 0 32 42" ><rect x="9.2" y="3" width="13" height="26" rx="6.5" fill="#83bbec" stroke="#1e7fd6" stroke-width="1.5"/><path d="M4.6 21 C4.6 28 9 32.6 15.7 32.6 C22.4 32.6 27 28 27 21" fill="none" stroke="#444" stroke-width="1.5"/><path d="M15.7 32.6 V40" stroke="#444" stroke-width="1.5"/></svg>
<svg style="left:0;top:0" width="1" height="1"><path d="M1601.5 179.4 L1605.0 183 L1608.5 179.4" fill="none" stroke="#333" stroke-width="1.3"/></svg>
<svg style="left:1661px;top:108px" width="40" height="40" viewBox="0 0 40 40" ><rect x="2.6" y="2.6" width="34.4" height="34.4" fill="#fafafa" stroke="#e8682f" stroke-width="1.6"/><rect x="7" y="7" width="11" height="11" fill="none" stroke="#e8682f" stroke-width="1.4"/><rect x="21.6" y="7" width="11" height="11" fill="none" stroke="#e8682f" stroke-width="1.4"/><rect x="7" y="21.6" width="11" height="11" fill="none" stroke="#e8682f" stroke-width="1.4"/><rect x="21.6" y="21.6" width="11" height="11" fill="none" stroke="#e8682f" stroke-width="1.4"/></svg>
<div class="a" style="left:1730px;top:104px;width:64px;height:96px;background:#ebebeb;border:1px solid #8f8f8f;border-radius:5px"></div>
<svg style="left:1740px;top:106px" width="42" height="38" viewBox="0 0 42 38" ><rect x="5.4" y="8.6" width="33" height="26" fill="none" stroke="#7d7d7d" stroke-width="1.4"/><rect x="8.2" y="11.4" width="27.4" height="20.4" fill="#fafafa" stroke="#b5b5b5" stroke-width="1.3"/><path d="M28 11.4 V31.6 M28 17.6 H35.6" stroke="#9a9a9a" stroke-width="1.3"/>
 <path d="M9 1 H17.6 L12.6 10.2 H16.8 L3.6 25 L8 14 H3.4 Z" fill="#fbd48a" stroke="#e8912d" stroke-width="1.2" stroke-linejoin="round"/></svg>
<svg style="left:0;top:0" width="1" height="1"><path d="M1887.5 203.6 L1893.75 210 L1900 203.6" fill="none" stroke="#333" stroke-width="1.3"/></svg>
<div class="a" style="left:526px;top:170.2px;width:20px;height:1.2px;background:#9c9c9c"></div>
<!-- main slide photo -->
<svg style="left:841px;top:410px" width="540" height="361"><use href="#ph" width="540" height="361"/></svg>
<!-- slide thumbnails -->
<svg style="left:47px;top:249px" width="296" height="167" viewBox="0 0 296 167">
<defs><clipPath id="t1c"><rect width="296" height="167" rx="4.5"/></clipPath>
<radialGradient id="t1v" cx="0.56" cy="0.45" r="0.75"><stop offset="0" stop-color="#000" stop-opacity="0"/><stop offset=".55" stop-color="#000" stop-opacity=".06"/><stop offset="1" stop-color="#000" stop-opacity=".62"/></radialGradient>
<linearGradient id="t1b" x1="0" y1="0" x2="0" y2="1"><stop offset="0" stop-color="#000" stop-opacity=".0"/><stop offset=".62" stop-color="#000" stop-opacity="0"/><stop offset="1" stop-color="#000" stop-opacity=".5"/></linearGradient>
<filter id="t1bl"><feGaussianBlur stdDeviation="0.5"/></filter>
<radialGradient id="t1tl" cx="30" cy="10" r="190" gradientUnits="userSpaceOnUse"><stop offset="0" stop-color="#000" stop-opacity=".55"/><stop offset=".5" stop-color="#000" stop-opacity=".34"/><stop offset="1" stop-color="#000" stop-opacity="0"/></radialGradient></defs>
<g clip-path="url(#t1c)">
<rect width="296" height="167" fill="#eeeeee"/>
<path d="M66 0 H200 L196 22 L70 30 Z" fill="#dcdcdc"/>
<path d="M72.0 0 L75.6 0 L73.4 20.0 L69.8 20.0 Z" fill="#6e6a78" opacity=".8"/>
<path d="M80.6 0 L84.2 0 L82.0 17.5 L78.4 17.5 Z" fill="#8c8578" opacity=".8"/>
<path d="M89.2 0 L92.8 0 L90.6 15.0 L87.0 15.0 Z" fill="#b5b09c" opacity=".8"/>
<path d="M97.8 0 L101.4 0 L99.2 12.5 L95.6 12.5 Z" fill="#74707c" opacity=".8"/>
<path d="M106.4 0 L110.0 0 L107.8 20.0 L104.2 20.0 Z" fill="#6e6a78" opacity=".8"/>
<path d="M115.0 0 L118.6 0 L116.4 17.5 L112.8 17.5 Z" fill="#8c8578" opacity=".8"/>
<path d="M123.6 0 L127.2 0 L125.0 15.0 L121.4 15.0 Z" fill="#b5b09c" opacity=".8"/>
<path d="M132.2 0 L135.8 0 L133.6 12.5 L130.0 12.5 Z" fill="#74707c" opacity=".8"/>
<path d="M140.8 0 L144.4 0 L142.2 20.0 L138.6 20.0 Z" fill="#6e6a78" opacity=".8"/>
<path d="M149.4 0 L153.0 0 L150.8 17.5 L147.2 17.5 Z" fill="#8c8578" opacity=".8"/>
<path d="M158.0 0 L161.6 0 L159.4 15.0 L155.8 15.0 Z" fill="#b5b09c" opacity=".8"/>
<path d="M166.6 0 L170.2 0 L168.0 12.5 L164.4 12.5 Z" fill="#74707c" opacity=".8"/>
<path d="M175.2 0 L178.8 0 L176.6 20.0 L173.0 20.0 Z" fill="#6e6a78" opacity=".8"/>
<path d="M183.8 0 L187.4 0 L185.2 17.5 L181.6 17.5 Z" fill="#8c8578" opacity=".8"/>
<path d="M86 34 L205 12 L232 96 L112 123 Z" fill="#f5f5f5" stroke="#b8b8b8" stroke-width=".5"/>
<path d="M90 40 L196 20 L222 94 L114 118 Z" fill="none" stroke="#cfcfcf" stroke-width=".4"/>
<path d="M145.8 66.6 L107.5 54.8 A40.8 34.6 0 0 1 135.9 33.0 Z" fill="#b9ae99"/>
<path d="M145.8 66.6 L135.9 33.0 A40.8 34.6 0 0 1 173.1 40.9 Z" fill="#7d8494"/>
<path d="M145.8 66.6 L173.1 40.9 A40.8 34.6 0 0 1 186.0 60.6 Z" fill="#6a5e5a"/>
<path d="M145.8 66.6 L186.0 60.6 A40.8 34.6 0 0 1 186.2 71.4 Z" fill="#bfc3a6"/>
<path d="M145.8 66.6 L186.2 71.4 A40.8 34.6 0 0 1 181.8 82.8 Z" fill="#8b909c"/>
<path d="M145.8 66.6 L181.8 82.8 A40.8 34.6 0 0 1 165.0 97.1 Z" fill="#6f6b78"/>
<path d="M145.8 66.6 L165.0 97.1 A40.8 34.6 0 0 1 155.7 100.2 Z" fill="#a9a391"/>
<path d="M145.8 66.6 L155.7 100.2 A40.8 34.6 0 0 1 144.4 101.2 Z" fill="#7c8a9c"/>
<path d="M145.8 66.6 L144.4 101.2 A40.8 34.6 0 0 1 130.5 98.7 Z" fill="#5e5a66"/>
<path d="M145.8 66.6 L130.5 98.7 A40.8 34.6 0 0 1 116.5 90.6 Z" fill="#c2c4aa"/>
<path d="M145.8 66.6 L116.5 90.6 A40.8 34.6 0 0 1 107.5 78.4 Z" fill="#8a8494"/>
<path d="M145.8 66.6 L107.5 78.4 A40.8 34.6 0 0 1 105.1 64.2 Z" fill="#a5acb8"/>
<path d="M145.8 66.6 L105.1 64.2 A40.8 34.6 0 0 1 107.5 54.8 Z" fill="#9aa6b4"/>
<circle cx="181.0" cy="20.0" r="1" fill="#b9ae99"/><rect x="184.0" y="19.0" width="5" height="1.2" fill="#999" transform="rotate(-14 184.0 19.0)"/>
<circle cx="183.1" cy="26.2" r="1" fill="#7d8494"/><rect x="186.1" y="25.2" width="5" height="1.2" fill="#999" transform="rotate(-14 186.1 25.2)"/>
<circle cx="185.2" cy="32.4" r="1" fill="#6a5e5a"/><rect x="188.2" y="31.4" width="5" height="1.2" fill="#999" transform="rotate(-14 188.2 31.4)"/>
<circle cx="187.3" cy="38.6" r="1" fill="#bfc3a6"/><rect x="190.3" y="37.6" width="5" height="1.2" fill="#999" transform="rotate(-14 190.3 37.6)"/>
<circle cx="189.4" cy="44.8" r="1" fill="#8b909c"/><rect x="192.4" y="43.8" width="5" height="1.2" fill="#999" transform="rotate(-14 192.4 43.8)"/>
<circle cx="191.5" cy="51.0" r="1" fill="#6f6b78"/><rect x="194.5" y="50.0" width="5" height="1.2" fill="#999" transform="rotate(-14 194.5 50.0)"/>
<circle cx="193.6" cy="57.2" r="1" fill="#a9a391"/><rect x="196.6" y="56.2" width="5" height="1.2" fill="#999" transform="rotate(-14 196.6 56.2)"/>
<circle cx="195.7" cy="63.4" r="1" fill="#7c8a9c"/><rect x="198.7" y="62.4" width="5" height="1.2" fill="#999" transform="rotate(-14 198.7 62.4)"/>
<circle cx="197.8" cy="69.6" r="1" fill="#5e5a66"/><rect x="200.8" y="68.6" width="5" height="1.2" fill="#999" transform="rotate(-14 200.8 68.6)"/>
<circle cx="199.9" cy="75.8" r="1" fill="#c2c4aa"/><rect x="202.9" y="74.8" width="5" height="1.2" fill="#999" transform="rotate(-14 202.9 74.8)"/>
<circle cx="202.0" cy="82.0" r="1" fill="#8a8494"/><rect x="205.0" y="81.0" width="5" height="1.2" fill="#999" transform="rotate(-14 205.0 81.0)"/>
<circle cx="204.1" cy="88.2" r="1" fill="#a5acb8"/><rect x="207.1" y="87.2" width="5" height="1.2" fill="#999" transform="rotate(-14 207.1 87.2)"/>
<path d="M0 70 L92 36 L108 122 L0 150 Z" fill="#f1f1f1"/>
<path d="M0 88.0 L96.0 52.0" stroke="#c9c9c9" stroke-width=".5"/>
<path d="M0 97.5 L97.6 62.2" stroke="#c9c9c9" stroke-width=".5"/>
<path d="M0 107.0 L99.2 72.4" stroke="#c9c9c9" stroke-width=".5"/>
<path d="M0 116.5 L100.8 82.6" stroke="#c9c9c9" stroke-width=".5"/>
<path d="M0 126.0 L102.4 92.8" stroke="#c9c9c9" stroke-width=".5"/>
<path d="M0 135.5 L104.0 103.0" stroke="#c9c9c9" stroke-width=".5"/>
<path d="M0 145.0 L105.6 113.2" stroke="#c9c9c9" stroke-width=".5"/>
<path d="M2 92 L11 85 L23 102 L33 101 L42 97 L50 91 L62 104 L70 56 L78 48" fill="none" stroke="#a3a88c" stroke-width=".8"/>
<path d="M2 106 L14 108 L24 106 L35 119 L43 103 L53 106 L62 106 L69 93 L76 82 L84 75" fill="none" stroke="#6b5a58" stroke-width="1"/>
<rect x="2.5" y="105.5" width="3" height="3" fill="#6b5a58"/>
<rect x="12.5" y="106.5" width="3" height="3" fill="#6b5a58"/>
<rect x="22.5" y="104.5" width="3" height="3" fill="#6b5a58"/>
<rect x="33.5" y="116.5" width="3" height="3" fill="#6b5a58"/>
<rect x="41.5" y="101.5" width="3" height="3" fill="#6b5a58"/>
<rect x="51.5" y="104.5" width="3" height="3" fill="#6b5a58"/>
<rect x="60.5" y="104.5" width="3" height="3" fill="#6b5a58"/>
<rect x="67.5" y="91.5" width="3" height="3" fill="#6b5a58"/>
<rect x="74.5" y="80.5" width="3" height="3" fill="#6b5a58"/>
<rect x="82.5" y="73.5" width="3" height="3" fill="#6b5a58"/>
<path d="M0 124 L8 128 L17 125 L27 120 L36 121 L46 120 L55 116 L64 113 L73 111 L82 106 L90 99" fill="none" stroke="#6a7896" stroke-width=".9"/>
<path d="M0 150 L232 104 L262 167 L0 167 Z" fill="#f3f3f3"/>
<path d="M10 167 L8 158 L232 107 M140 127 L152 167 M186 117 L199 167 M232 107 L252 167 M100 137 L108 167" fill="none" stroke="#555" stroke-width=".6"/>
<g font-family="Liberation Sans,sans-serif" font-size="4.7" fill="#4a4a4a" filter="url(#t1bl)">
<text x="81.5" y="149.4" transform="rotate(-14 81.5 149.4)">125,058</text>
<text x="82.5" y="155.1" transform="rotate(-14 82.5 155.1)">125,487</text>
<text x="83.5" y="160.8" transform="rotate(-14 83.5 160.8)">124,000</text>
<text x="84.5" y="166.5" transform="rotate(-14 84.5 166.5)">84,000</text>
<text x="124.6" y="138.0" transform="rotate(-14 124.6 138.0)">154,568</text>
<text x="126.7" y="143.7" transform="rotate(-14 126.7 143.7)">56,845</text>
<text x="128.8" y="149.4" transform="rotate(-14 128.8 149.4)">110,000</text>
<text x="130.9" y="155.1" transform="rotate(-14 130.9 155.1)">150,000</text>
<text x="133.0" y="160.8" transform="rotate(-14 133.0 160.8)">35,000</text>
<text x="135.1" y="166.5" transform="rotate(-14 135.1 166.5)">21,000</text>
<text x="170.0" y="127.5" transform="rotate(-14 170.0 127.5)">95,054</text>
<text x="171.0" y="133.2" transform="rotate(-14 171.0 133.2)">97,511</text>
<text x="172.0" y="138.9" transform="rotate(-14 172.0 138.9)">99,011</text>
<text x="173.0" y="144.6" transform="rotate(-14 173.0 144.6)">99,216</text>
<text x="174.0" y="150.3" transform="rotate(-14 174.0 150.3)">101,090</text>
<text x="175.0" y="156.0" transform="rotate(-14 175.0 156.0)">101,684</text>
<text x="176.0" y="161.7" transform="rotate(-14 176.0 161.7)">77,962</text>
<text x="212.5" y="115.4" transform="rotate(-14 212.5 115.4)">124,500</text>
<text x="215.0" y="121.1" transform="rotate(-14 215.0 121.1)">125,000</text>
<text x="217.5" y="126.8" transform="rotate(-14 217.5 126.8)">154,000</text>
<text x="220.0" y="132.5" transform="rotate(-14 220.0 132.5)">95,000</text>
<text x="222.5" y="138.2" transform="rotate(-14 222.5 138.2)">154,200</text>
<text x="225.0" y="143.9" transform="rotate(-14 225.0 143.9)">110,000</text>
<text x="227.5" y="149.6" transform="rotate(-14 227.5 149.6)">89,000</text>
<text x="230.0" y="155.3" transform="rotate(-14 230.0 155.3)">50,000</text>
<text x="232.5" y="161.0" transform="rotate(-14 232.5 161.0)">38,700</text>
</g>
<text x="3" y="146" font-family="Liberation Sans,sans-serif" font-size="4" fill="#666" transform="rotate(-21 3 146)" filter="url(#t1bl)">b  mar  apr  may  jun    jul    aug   sep   oct</text>
<path d="M196 0 H296 V70 L250 58 L230 40 L186 22 Z" fill="#c9c9c9"/>
<path d="M192 2.0 L262 52" stroke="#efefef" stroke-width="4.5"/><path d="M190 6.0 L260 56" stroke="#9a9a9a" stroke-width=".6"/>
<path d="M201 3.5 L268 54" stroke="#efefef" stroke-width="4.5"/><path d="M199 7.5 L266 58" stroke="#9a9a9a" stroke-width=".6"/>
<path d="M210 5.0 L274 56" stroke="#efefef" stroke-width="4.5"/><path d="M208 9.0 L272 60" stroke="#9a9a9a" stroke-width=".6"/>
<path d="M219 6.5 L280 58" stroke="#efefef" stroke-width="4.5"/><path d="M217 10.5 L278 62" stroke="#9a9a9a" stroke-width=".6"/>
<path d="M228 8.0 L286 60" stroke="#efefef" stroke-width="4.5"/><path d="M226 12.0 L284 64" stroke="#9a9a9a" stroke-width=".6"/>
<path d="M237 9.5 L292 62" stroke="#efefef" stroke-width="4.5"/><path d="M235 13.5 L290 66" stroke="#9a9a9a" stroke-width=".6"/>
<path d="M246 11.0 L298 64" stroke="#efefef" stroke-width="4.5"/><path d="M244 15.0 L296 68" stroke="#9a9a9a" stroke-width=".6"/>
<rect x="256" y="62" width="40" height="90" fill="#ececec"/>
<rect x="258" y="66.0" width="38" height="2" fill="#6d6470"/><rect x="258" y="68.0" width="33" height="1.8" fill="#a9ad98"/><rect x="258" y="69.8" width="18" height="1.4" fill="#8c93a6"/>
<rect x="258" y="73.2" width="32" height="2" fill="#6d6470"/><rect x="258" y="75.2" width="28" height="1.8" fill="#a9ad98"/><rect x="258" y="77.0" width="30" height="1.4" fill="#8c93a6"/>
<rect x="258" y="80.4" width="26" height="2" fill="#6d6470"/><rect x="258" y="82.4" width="38" height="1.8" fill="#a9ad98"/><rect x="258" y="84.2" width="24" height="1.4" fill="#8c93a6"/>
<rect x="258" y="87.6" width="38" height="2" fill="#6d6470"/><rect x="258" y="89.6" width="33" height="1.8" fill="#a9ad98"/><rect x="258" y="91.4" width="18" height="1.4" fill="#8c93a6"/>
<rect x="258" y="94.8" width="32" height="2" fill="#6d6470"/><rect x="258" y="96.8" width="28" height="1.8" fill="#a9ad98"/><rect x="258" y="98.6" width="30" height="1.4" fill="#8c93a6"/>
<rect x="258" y="102.0" width="26" height="2" fill="#6d6470"/><rect x="258" y="104.0" width="38" height="1.8" fill="#a9ad98"/><rect x="258" y="105.8" width="24" height="1.4" fill="#8c93a6"/>
<rect x="258" y="109.2" width="38" height="2" fill="#6d6470"/><rect x="258" y="111.2" width="33" height="1.8" fill="#a9ad98"/><rect x="258" y="113.0" width="18" height="1.4" fill="#8c93a6"/>
<rect x="258" y="116.4" width="32" height="2" fill="#6d6470"/><rect x="258" y="118.4" width="28" height="1.8" fill="#a9ad98"/><rect x="258" y="120.2" width="30" height="1.4" fill="#8c93a6"/>
<rect x="258" y="123.6" width="26" height="2" fill="#6d6470"/><rect x="258" y="125.6" width="38" height="1.8" fill="#a9ad98"/><rect x="258" y="127.4" width="24" height="1.4" fill="#8c93a6"/>
<rect x="258" y="130.8" width="38" height="2" fill="#6d6470"/><rect x="258" y="132.8" width="33" height="1.8" fill="#a9ad98"/><rect x="258" y="134.6" width="18" height="1.4" fill="#8c93a6"/>
<rect x="258" y="138.0" width="32" height="2" fill="#6d6470"/><rect x="258" y="140.0" width="28" height="1.8" fill="#a9ad98"/><rect x="258" y="141.8" width="30" height="1.4" fill="#8c93a6"/>
<rect x="258" y="145.2" width="26" height="2" fill="#6d6470"/><rect x="258" y="147.2" width="38" height="1.8" fill="#a9ad98"/><rect x="258" y="149.0" width="24" height="1.4" fill="#8c93a6"/>
<text x="249" y="68" font-family="Liberation Sans,sans-serif" font-size="3.4" fill="#888">7</text><text x="250" y="80" font-family="Liberation Sans,sans-serif" font-size="3.4" fill="#888">6</text><text x="251" y="92" font-family="Liberation Sans,sans-serif" font-size="3.4" fill="#888">5</text>
<path d="M287 68 L296 82 V66 Z" fill="#d8d8d8"/>
<ellipse cx="279" cy="44" rx="24.5" ry="26.5" fill="#bdbdbd"/><ellipse cx="279" cy="41" rx="23.5" ry="24" fill="#e2e2e2"/><ellipse cx="279.5" cy="41" rx="19" ry="20" fill="#2b2b2b"/><ellipse cx="280" cy="42" rx="14.5" ry="15.5" fill="#3c3c3c"/>
<path d="M280 28 L282 40 L293 42 L282 44 L280 57 L278 44 L267 42 L278 40 Z M272 34 L281 41 M288 34 L279 43 M288 50 L279 41 M272 50 L281 43" fill="#d9d9d9" stroke="#cfcfcf" stroke-width=".7"/>
<path d="M0 0 H70 L58.5 72 Q57 78 50 78.5 L0 82 Z" fill="#1d1d1d"/><path d="M0 82 L50 78.5 Q57 78 58.5 72 L60 62 L59 80 Q58 84 52 84 L0 88 Z" fill="#3a3a3a"/>
<rect x="12" y="-3" width="19" height="9" rx="2" fill="#2e2e2e" stroke="#111" stroke-width=".6" transform="skewX(-4)"/>
<rect x="38" y="-3" width="18" height="9" rx="2" fill="#2e2e2e" stroke="#111" stroke-width=".6" transform="skewX(-4)"/>
<rect x="9" y="10" width="20" height="15" rx="2" fill="#2e2e2e" stroke="#111" stroke-width=".6" transform="skewX(-4)"/>
<rect x="35" y="11" width="20" height="16" rx="2" fill="#2e2e2e" stroke="#111" stroke-width=".6" transform="skewX(-4)"/>
<rect x="-6" y="10" width="10" height="14" rx="2" fill="#2e2e2e" stroke="#111" stroke-width=".6" transform="skewX(-4)"/>
<rect x="6" y="30" width="21" height="15" rx="2" fill="#2e2e2e" stroke="#111" stroke-width=".6" transform="skewX(-4)"/>
<rect x="32" y="31" width="20" height="24" rx="2" fill="#2e2e2e" stroke="#111" stroke-width=".6" transform="skewX(-4)"/>
<rect x="-4" y="30" width="6" height="14" rx="2" fill="#2e2e2e" stroke="#111" stroke-width=".6" transform="skewX(-4)"/>
<rect x="3" y="50" width="20" height="14" rx="2" fill="#2e2e2e" stroke="#111" stroke-width=".6" transform="skewX(-4)"/>
<g font-family="Liberation Sans,sans-serif" fill="#bdbdbd" font-style="italic"><text x="15" y="23" font-size="9">6</text><text x="12" y="41" font-size="9">3</text><text x="40" y="21" font-size="8">–</text><text x="33" y="49" font-size="9" fill="#c8c8c8">+</text><text x="7" y="61" font-size="9" fill="#c8c8c8">=</text><text x="44" y="5" font-size="7">×</text><text x="18" y="3" font-size="8">9</text></g>
<path d="M38 167 L96 109 L103 116 L50 167 Z" fill="#0e0e0e"/><path d="M70 135 L74 131 L81 138 L77 142 Z M95 110 L99 106 L106 113 L102 117 Z" fill="#cfcfcf"/><path d="M99 108 L110 100 L104 113 Z" fill="#bdbdbd" stroke="#777" stroke-width=".5"/><path d="M44 164 L96 112" stroke="#555" stroke-width=".8"/>
<rect width="296" height="167" fill="url(#t1v)"/><rect width="296" height="167" fill="url(#t1b)"/><rect width="296" height="167" fill="url(#t1tl)"/>
<rect x="21.4" y="20.6" width="18" height="1.1" fill="#2aa3dc"/>
</g></svg>
<div class="a" style="left:47px;top:442.6px;width:296px;height:167.4px;border-radius:4.5px;background:#fff;box-shadow:0 0 0 1px rgba(0,0,0,.10),0 1px 3px rgba(0,0,0,.18);overflow:hidden"><div style="height:38.3px;background:linear-gradient(100deg,#061521 0%,#0c2a40 28%,#123d57 62%,#12405a 72%,#0d2f47 88%,#081c2c 100%)"></div></div>
<svg style="left:93.4px;top:531.2px" width="1" height="1"><circle r="18" fill="#0f2740"/><g fill="none" stroke="#fff" stroke-width=".75" stroke-linejoin="round" stroke-linecap="round" transform="scale(1.28)"><path d="M-6.2 4.6 L-1.4 -4.6 L1.6 1 M0 4.6 L3 -1 L6.2 4.6 Z M-6.2 4.6 H6.2 M-2.6 -1.6 L-1.4 -0.6 L-0.2 -1.8" /></g></svg>
<svg style="left:161.3px;top:531.2px" width="1" height="1"><circle r="18" fill="#0f2740"/><g fill="none" stroke="#fff" stroke-width=".75" stroke-linejoin="round" stroke-linecap="round" transform="scale(1.28)"><path d="M-4.6 2.2 A2.7 2.7 0 0 1 -4 -3 A3.4 3.4 0 0 1 2.4 -3.8 A2.9 2.9 0 0 1 4.6 1.4 M0.8 -0.6 L-1 2.8 H1.2 L-0.6 6" /></g></svg>
<svg style="left:229.1px;top:531.2px" width="1" height="1"><circle r="18" fill="#0f2740"/><g fill="none" stroke="#fff" stroke-width=".75" stroke-linejoin="round" stroke-linecap="round" transform="scale(1.28)"><path d="M-3.4 6 V-6 M-3.4 -5.2 H1.6 V-2.6 H5.4 V2.2 H0.4 V-0.2 H-3.4" /></g></svg>
<svg style="left:296.7px;top:531.2px" width="1" height="1"><circle r="18" fill="#0f2740"/><g fill="none" stroke="#fff" stroke-width=".75" stroke-linejoin="round" stroke-linecap="round" transform="scale(1.28)"><circle r="6"/><path d="M-6 0 H6 M0 -6 V6 M0 -6 C-4 -2 -4 2 0 6 M0 -6 C4 -2 4 2 0 6 M-5 -3.2 H5 M-5 3.2 H5"/></g></svg>
<div class="a" style="left:43px;top:633px;width:304px;height:174.6px;border-radius:8px;background:#fff;border:3px solid #7a0d12"></div>
<svg style="left:173px;top:670px" width="150" height="100.3"><use href="#ph" width="150" height="100.3"/></svg>
<svg style="left:15px;top:267px" width="13" height="12" viewBox="0 0 13 12"><path d="M7.2 0.8 L8.7 4.4 L12.5 4.7 L9.6 7.2 L10.5 11 L7.2 9 L3.9 11 L4.8 7.2 L1.9 4.7 L5.7 4.4 Z" fill="#555"/><path d="M0 3.6 H1 M0 5.8 H1.4" stroke="#555" stroke-width=".9"/></svg>
<!-- designer pane -->
<svg style="left:1846px;top:244px" width="16" height="14" viewBox="0 0 16 14" fill="none" stroke="#333" stroke-width="1.4"><path d="M1 3 L8 10 L15 3"/></svg>
<svg style="left:1887px;top:244px" width="14" height="14" viewBox="0 0 14 14" fill="none" stroke="#333" stroke-width="1.4"><path d="M1 1 L13 13 M13 1 L1 13"/></svg>
<!-- card 1 -->
<div class="a" style="left:1516px;top:301.5px;width:351px;height:198.5px;background:#fff;border-radius:4px;box-shadow:0 0 0 1px rgba(0,0,0,.05),0 1px 3px rgba(0,0,0,.18)"></div>
<svg style="left:1516px;top:301.5px" width="351" height="198.5" viewBox="1516 301.5 351 198.5">
 <defs><clipPath id="d1c"><circle cx="1878.7" cy="417.8" r="209.9"/></clipPath><clipPath id="d1r"><rect x="1516" y="301.5" width="351" height="198.5" rx="4"/></clipPath></defs>
 <g clip-path="url(#d1r)"><g clip-path="url(#d1c)"><use href="#ph" x="1642" y="301" width="297" height="199"/></g>
 <circle cx="1880.7" cy="417.8" r="211" fill="none" stroke="#e9eef2" stroke-width="1"/></g>
 <path d="M1535.4 377.2 C1560 376.4 1600 378 1635.8 376.8 M1537 377.8 C1570 377.4 1610 376.4 1634 377.4" fill="none" stroke="#e8672e" stroke-width="1.5" stroke-linecap="round"/>
</svg>
<!-- card 2 -->
<div class="a" style="left:1516px;top:525px;width:351px;height:198.5px;background:#fff;border-radius:4px;box-shadow:0 0 0 1px rgba(0,0,0,.05),0 1px 3px rgba(0,0,0,.18)"></div>
<svg style="left:1516px;top:525px" width="351" height="198.5" viewBox="1516 525 351 198.5">
 <defs><clipPath id="d2c"><circle cx="1611.5" cy="624.4" r="84.6"/></clipPath>
 <linearGradient id="d2g" x1="0" y1="0" x2="0" y2="1"><stop offset="0" stop-color="#3b4f78"/><stop offset=".5" stop-color="#7a6a86"/><stop offset="1" stop-color="#e07a66"/></linearGradient>
 <linearGradient id="d2l" x1="0" y1="0" x2="0" y2="1"><stop offset="0" stop-color="#e8743c"/><stop offset="1" stop-color="#1d5fa8"/></linearGradient></defs>
 <circle cx="1609.6" cy="625.6" r="84.6" fill="url(#d2g)"/>
 <circle cx="1611.5" cy="624.4" r="84.6" fill="#fff"/>
 <g clip-path="url(#d2c)"><use href="#ph" x="1503.6" y="538" width="262" height="175"/></g>
 <path d="M1545.4 548.2 H1550.6 M1548 545.6 V550.8" stroke="#1f5c8c" stroke-width=".9"/>
 <circle cx="1531.6" cy="573" r="1.7" fill="none" stroke="#1f5c8c" stroke-width=".8"/>
 <circle cx="1675.3" cy="693.2" r="1.7" fill="#1f5c8c"/>
 <rect x="1849.6" y="630" width="1.1" height="92.5" fill="url(#d2l)"/>
</svg>
<!-- card 3 -->
<div class="a" style="left:1516px;top:749.5px;width:351px;height:198.5px;background:#fff;border-radius:4px;box-shadow:0 0 0 1px rgba(0,0,0,.05),0 1px 3px rgba(0,0,0,.18)"></div>
<svg style="left:1516px;top:749.5px" width="351" height="198.5" viewBox="1516 749.5 351 198.5">
 <defs><clipPath id="d3c"><path d="M1867 749.5 L1733.7 750.0 L1730.0 758.3 L1696.8 762.9 L1718.9 770.3 L1722.6 777.7 L1728.1 788.7 L1735.5 796.1 L1739.2 805.3 L1709.7 806.3 L1724.5 814.6 L1717.1 823.8 L1711.5 831.2 L1700.5 835.8 L1707.9 844.1 L1704.2 847.8 L1709.7 853.3 L1702.3 860.7 L1706.0 871.8 L1695.9 877.3 L1702.3 881.9 L1695.9 885.6 L1704.2 892.0 L1702.3 897.6 L1711.5 903.1 L1714.3 912.3 L1718.0 916.0 L1714.3 927.1 L1720.8 931.7 L1726.3 940.0 L1731.8 945.5 L1737.4 948.9 L1867 948 Z"/></clipPath><clipPath id="d3r"><rect x="1516" y="749.5" width="351" height="198.5" rx="4"/></clipPath></defs>
 <g clip-path="url(#d3r)"><g clip-path="url(#d3c)"><use href="#ph" x="1657.6" y="748.5" width="297" height="199.5"/></g></g>
</svg>
<!-- card 4 (cut) -->
<div class="a" style="left:1516px;top:973.6px;width:351px;height:14.4px;background:#fff;border-radius:4px 4px 0 0;box-shadow:0 0 0 1px rgba(0,0,0,.04);overflow:hidden"><div style="position:absolute;left:160px;top:0;width:200px;height:15px;transform:skewX(-14deg);transform-origin:0 0;background:linear-gradient(90deg,#7fb8f2 0%,#b5d8fa 22%,#dfeeff 34%,#a9d0f8 50%,#4f9bea 72%,#2f86e4 100%)"></div></div>
<!-- status bar icons -->
<svg style="left:0;top:0" width="1" height="1" fill="none" stroke="#383838" stroke-width="1.5" stroke-linejoin="round"><path d="M115.6 1012.4 H108 V1025.6 H115.6 M115.6 1012.4 V1025.6 M115.6 1012.4 H123 V1020.6"/><path d="M117.6 1023.2 L120.8 1026.6 L124.8 1022" stroke-width="1.4"/></svg>
<svg style="left:146px;top:1009px" width="20" height="20" viewBox="0 0 20 20" fill="none" stroke="#2e2e2e" stroke-width="1.35" stroke-linecap="round" stroke-linejoin="round"><circle cx="9" cy="3.2" r="2"/><path d="M2.2 5.6 Q3 4.6 4.2 5.2 L7.4 6.8 H10.6 L13.8 5.2 Q15 4.6 15.8 5.6 Q16.2 6.8 15 7.4 L11.4 9.2 V11.4 M6.6 9.2 L3 7.4 Q1.8 6.8 2.2 5.6 M6.6 9.2 V12.6 L4.2 17.8 Q4.6 19 5.8 18.6 L8.4 13.6"/><path d="M11.4 12.6 L17.8 19 M17.8 12.6 L11.4 19" stroke-width="1.4"/></svg>
<svg style="left:1395px;top:1007px" width="22" height="22" viewBox="0 0 22 22" fill="none" stroke="#444" stroke-width="1.2"><path d="M1 11 H21 M1 15.2 H21 M1 19.4 H21"/><path d="M7.6 6.6 L11 3.2 L14.4 6.6"/></svg>
<svg style="left:1491px;top:1009px" width="22" height="20" viewBox="0 0 22 20" fill="none" stroke="#333" stroke-width="1.3"><rect x="1.6" y="2.6" width="18.4" height="14.4"/><rect x="4.6" y="5.6" width="12.4" height="8.4" stroke-width="1.1"/><path d="M4.6 5.6 V2.6" stroke-width="1"/></svg>
<svg style="left:1541px;top:1009px" width="22" height="20" viewBox="0 0 22 20" fill="none" stroke="#444" stroke-width="1.3"><rect x="2" y="2.6" width="7" height="6"/><rect x="12.6" y="2.6" width="7" height="6"/><rect x="2" y="11.6" width="7" height="6"/><rect x="12.6" y="11.6" width="7" height="6"/></svg>
<svg style="left:1591px;top:1008px" width="22" height="22" viewBox="0 0 22 22" fill="none" stroke="#444" stroke-width="1.2"><path d="M11 4.4 Q7 2 2 3 V17.6 Q7 16.6 11 19 Q15 16.6 20 17.6 V3 Q15 2 11 4.4 V19"/><path d="M4.4 6.4 H8.6 M4.4 9.4 H8.6 M4.4 12.4 H8.6 M13.4 6.4 H17.6 M13.4 9.4 H17.6 M13.4 12.4 H17.6" stroke-width="1"/></svg>
<svg style="left:1642px;top:1008px" width="20" height="22" viewBox="0 0 20 22" fill="none" stroke="#444" stroke-width="1.3"><path d="M1 2.6 H19 M2.6 2.6 V11.6 H17.4 V2.6 M10 11.6 V18.6 M5.4 18.6 H14.6"/></svg>
<svg style="left:0;top:0" width="1" height="1" fill="none" stroke="#444" stroke-width="1.1"><path d="M1685 1019 H1693.4 M1700 1019 H1825 M1831 1019 H1839.6 M1835.3 1014.7 V1023.3 M1763 1015.6 V1022.4"/><rect x="1737.6" y="1012" width="4.8" height="14" fill="#444" stroke="none"/></svg>
<svg style="left:1896px;top:1008px" width="22" height="22" viewBox="0 0 22 22" fill="none" stroke="#333" stroke-width="1.2"><rect x="6.4" y="6.4" width="9.2" height="9.2" rx="1.4"/><path d="M8.4 3.6 L11 1 L13.6 3.6 M8.4 18.4 L11 21 L13.6 18.4 M3.6 8.4 L1 11 L3.6 13.6 M18.4 8.4 L21 11 L18.4 13.6"/></svg>
<!-- scroll bar of edit pane -->
<svg style="left:0;top:0" width="1" height="1" fill="#707070" stroke="#707070" stroke-width="1.2" stroke-linejoin="round"><path d="M1473.6 238 L1478.5 231 L1483.6 238 Z M1473.6 881.4 L1478.4 887.8 L1483.4 881.4 Z"/>
<path d="M1473.4 904 L1478.4 898.4 L1483.4 904 Z M1473.4 910 L1478.4 904.4 L1483.4 910 Z M1473.4 919 L1478.4 924.6 L1483.4 919 Z M1473.4 925.6 L1478.4 931.8 L1483.4 925.6 Z"/><rect x="1473.1" y="664.6" width="10.6" height="209.2" rx="5.3" stroke="none"/></svg>
<!-- taskbar icons -->
<svg style="left:22px;top:1047px" width="21" height="21" viewBox="0 0 21 21" fill="#fff"><path d="M0 3 L8.6 1.8 V10 H0 Z M9.6 1.6 L21 0 V10 H9.6 Z M0 11 H8.6 V19.2 L0 18 Z M9.6 11 H21 V21 L9.6 19.4 Z"/></svg>
<svg style="left:0;top:0" width="1" height="1" fill="none" stroke="#1a1a1a" stroke-width="1.5"><circle cx="89.9" cy="1053.8" r="6.5"/><path d="M85.3 1058.4 L77.3 1066.4" stroke-width="1.7"/></svg>
<svg style="left:330px;top:1038px" width="82" height="40" viewBox="0 0 82 40"><path d="M32 3.6 C33.6 13 36 15.8 46.4 18.2 C36 20.6 33.6 23.4 32 32.6 C30.4 23.4 28 20.6 17.6 18.2 C28 15.8 30.4 13 32 3.6Z" fill="#f9c23c"/><path d="M60.8 16.4 C61.6 20.8 62.8 22 67.6 23.2 C62.8 24.4 61.6 25.8 60.8 30 C60 25.8 58.8 24.4 54 23.2 C58.8 22 60 20.8 60.8 16.4Z" fill="#f9c23c"/><path d="M9 22.6 L10.6 26 L14.4 26.6 L11.4 29 L12.4 33 L9 30.8 L5.4 32.4 L6.6 28.8 L4 26 L7.6 26Z" fill="#23a7e8"/><circle cx="53" cy="7.4" r="2" fill="#f2693a"/><circle cx="75.6" cy="30.6" r="2.4" fill="#7fb83a"/></svg>
<svg style="left:440px;top:1045px" width="24" height="22" viewBox="0 0 24 22" fill="none" stroke="#fff" stroke-width="1.5"><rect x="2.2" y="5" width="12.6" height="12"/><path d="M1 1.4 H16 M1 20.6 H16 M20.4 1 V5 M20.4 17 V21"/><rect x="19.4" y="8" width="2" height="6" fill="#fff" stroke="none"/></svg>
<svg style="left:500px;top:1042px" width="32" height="30" viewBox="0 0 32 30"><defs><linearGradient id="cpA" x1="0" y1="0" x2="1" y2="1"><stop offset="0" stop-color="#2a7cf0"/><stop offset=".5" stop-color="#28c0e8"/><stop offset="1" stop-color="#f4c23a"/></linearGradient><linearGradient id="cpB" x1="0" y1="0" x2="1" y2="1"><stop offset="0" stop-color="#f06a9a"/><stop offset=".55" stop-color="#b25cf0"/><stop offset="1" stop-color="#e8486a"/></linearGradient></defs>
<path d="M10 2.4 H17.6 Q20.4 2.4 19.4 5.2 L14 23.4 Q13 26.6 9.6 26.6 H6 Q1 26.6 2.4 21.6 L6 6 Q7 2.4 10 2.4Z" fill="url(#cpA)"/><path d="M22 3.4 H26 Q31 3.4 29.6 8.4 L26 24 Q25 27.6 22 27.6 H14.4 Q11.6 27.6 12.6 24.8 L18 6.6 Q19 3.4 22 3.4Z" fill="url(#cpB)"/><path d="M13 9 L19 8 L17.6 21 L12 22Z" fill="#7a4fe0" opacity=".55"/></svg>
<svg style="left:563px;top:1043px" width="30" height="26" viewBox="0 0 30 26"><path d="M1 3 Q1 1.4 2.6 1.4 H10 L13 4.4 H27.4 Q29 4.4 29 6 V8 H1Z" fill="#e8a317"/><rect x="1" y="6" width="28" height="18" rx="1.6" fill="#fbd04e"/><path d="M8 24 V15.6 Q8 14.6 9 14.6 H21 Q22 14.6 22 15.6 V24 H19 V18 H11 V24Z" fill="#2f8fe0"/></svg>
<svg style="left:624px;top:1041px" width="32" height="32" viewBox="0 0 32 32"><path d="M10 8 V5.4 Q10 2 13.4 2 H18.6 Q22 2 22 5.4 V8" fill="none" stroke="#2f9be8" stroke-width="1.8"/><path d="M1.4 8 H30.6 V26.6 Q30.6 30.6 26.6 30.6 H5.4 Q1.4 30.6 1.4 26.6Z" fill="#f7f7f7"/><rect x="10.4" y="13" width="5" height="5" fill="#f25022"/><rect x="16.6" y="13" width="5" height="5" fill="#7fba00"/><rect x="10.4" y="19.2" width="5" height="5" fill="#00a4ef"/><rect x="16.6" y="19.2" width="5" height="5" fill="#ffb900"/></svg>
<svg style="left:686px;top:1041px" width="32" height="32" viewBox="0 0 32 32"><defs><linearGradient id="egA" x1="0" y1="0" x2="1" y2="0"><stop offset="0" stop-color="#1ea2e8"/><stop offset=".6" stop-color="#35c4c0"/><stop offset="1" stop-color="#5fd35a"/></linearGradient></defs><circle cx="16" cy="16" r="15" fill="#1470c4"/><path d="M1.4 14 C2 6 8.6 1 16.4 1 C25 1 31 7.4 31 14.4 C31 19.6 27 22.4 23 22.4 C20 22.4 18.4 21 18.6 19.4 C19 17.6 20.4 17.6 20.4 15 C20.4 12 17 9.8 13.4 9.8 C7.6 9.8 2.6 13.6 1.4 18Z" fill="url(#egA)"/><path d="M11 27.6 C7 24 7.6 17.6 12.6 15 C11 19 13 24.6 19 25.6 C23.4 26.2 26.4 24 28.6 21.6 C26 27.6 21 31 16 31 C14 31 12.4 29.4 11 27.6Z" fill="#0c4f9e"/></svg>
<svg style="left:748px;top:1042px" width="32" height="30" viewBox="0 0 32 30"><path d="M15 4 C24 3 29.6 8 28 15 C26.6 20.6 21 19.6 20 22 C19 24.6 22 26.6 18 27.4 C9 28.6 2 24 2 16.6 C2 9.6 8 5 15 4Z" fill="#d7dde6"/><circle cx="8.4" cy="15.4" r="2.3" fill="#e23b3b"/><circle cx="12.6" cy="9.6" r="2.3" fill="#f0a830"/><circle cx="19.4" cy="8.4" r="2.3" fill="#62b846"/><circle cx="9.6" cy="21.4" r="2.2" fill="#3a86e0"/><path d="M15 27.6 L27 5.4 L29.2 6.6 L17.6 28.4Z" fill="#c27a2c"/><path d="M26.6 6 L29.6 0.6 L31 2 L29.4 7.4Z" fill="#e8b04c"/></svg>
<svg style="left:810px;top:1042px" width="32" height="30" viewBox="0 0 32 30"><rect x="9" y="1.4" width="21.6" height="27" rx="1.6" fill="#21a366"/><rect x="9" y="1.4" width="10.8" height="6.8" fill="#107c41"/><rect x="19.8" y="1.4" width="10.8" height="6.8" fill="#33c481"/><rect x="19.8" y="8.2" width="10.8" height="6.8" fill="#21a366"/><rect x="9" y="8.2" width="10.8" height="6.8" fill="#185c37"/><rect x="9" y="15" width="21.6" height="13.4" fill="#107c41"/><rect x="19.8" y="15" width="10.8" height="6.8" fill="#107c41"/><rect x="19.8" y="21.8" width="10.8" height="6.6" fill="#185c37"/><rect x="1" y="7.4" width="15.6" height="15.6" rx="1.4" fill="#107c41"/><path d="M5.4 10.8 L8.8 15.2 L5.2 19.8 H7.8 L10.1 16.6 L12.4 19.8 H15 L11.4 15.2 L14.8 10.8 H12.2 L10.1 13.8 L8 10.8Z" fill="#fff" transform="translate(-1.3 0)"/></svg>
<svg style="left:871px;top:1042px" width="32" height="30" viewBox="0 0 32 30"><circle cx="17.6" cy="15" r="13.6" fill="#ed6c47"/><path d="M17.6 1.4 A13.6 13.6 0 0 1 31.2 15 H17.6Z" fill="#ff8f6b"/><path d="M31.2 15 A13.6 13.6 0 0 1 17.6 28.6 V15Z" fill="#d35230"/><rect x="1" y="7.2" width="15.6" height="15.6" rx="1.4" fill="#c43e1c"/><path d="M5.6 10.6 H9.6 Q13 10.6 13 13.7 Q13 16.9 9.4 16.9 H7.8 V19.6 H5.6Z M7.8 12.4 V15.1 H9.2 Q10.7 15.1 10.7 13.7 Q10.7 12.4 9.2 12.4Z" fill="#fff" fill-rule="evenodd"/></svg>
<div class="a" style="left:717px;top:1079.5px;width:11px;height:2.5px;background:#5a93c4"></div>
<!-- tray -->
<svg style="left:1327px;top:1042px" width="34" height="32" viewBox="0 0 34 32"><circle cx="15" cy="15" r="12.4" fill="#2f8fe0" stroke="#fff" stroke-width="2.4"/><path d="M10.6 11.4 Q10.8 7.2 15 7.2 Q19.4 7.2 19.4 11 Q19.4 13.4 17 14.8 Q15.4 15.8 15.4 18" fill="none" stroke="#fff" stroke-width="2.6"/><circle cx="15.4" cy="22.4" r="1.7" fill="#fff"/><circle cx="26.6" cy="24.6" r="5.4" fill="#f0a020" stroke="#fff" stroke-width="1"/><rect x="25.9" y="23.6" width="1.5" height="4" fill="#fff"/><circle cx="26.6" cy="21.8" r=".9" fill="#fff"/></svg>
<svg style="left:1456px;top:1045px" width="34" height="24" viewBox="0 0 34 24"><path d="M8 21 Q1.6 21 1.6 15.4 Q1.6 10.6 6.4 10 Q8 3 15.4 3 Q21.6 3 23.6 8.6 Q31.6 8.6 31.6 15 Q31.6 21 25.4 21Z" fill="#8fb4ea"/><path d="M8 21 Q1.6 21 1.6 15.4 Q1.6 11.4 5.4 10.4 Q10 14 17 13 Q25 12 31 13 Q32.4 21 25.4 21Z" fill="#6f95da"/></svg>
<svg style="left:0;top:0" width="1" height="1" fill="none" stroke="#fff" stroke-width="1.3"><path d="M1628 1062.4 L1636.4 1053.6 L1644.8 1062.4"/>
<rect x="1661.6" y="1051" width="8" height="13" rx="2.4" stroke-width="1.1"/><path d="M1669.6 1055.6 L1674 1052.6 V1062.4 L1669.6 1059.4 M1665.6 1048.6 V1051 M1665.6 1064 V1066.4" stroke-width="1.1"/><circle cx="1665.6" cy="1057.4" r="1.6" stroke-width="1"/>
<path d="M1688 1050.6 L1706.6 1047.6 V1065.4 L1688 1062.6Z" stroke-width="1.1"/><path d="M1693.6 1054.4 Q1697 1052.4 1699.6 1054.4 M1693.6 1058.6 Q1695.6 1057.6 1697 1058.6" stroke-width="1"/>
<rect x="1721.6" y="1050.6" width="15.4" height="10.4" stroke-width="1.1"/><path d="M1718 1049 H1724 V1053 M1718.4 1049 V1065.6 H1726 M1729.4 1061 V1065.4 M1726 1065.6 H1733" stroke-width="1.1"/>
<path d="M1748 1054.4 H1751.6 L1756 1050.4 V1064.6 L1751.6 1060.6 H1748Z" stroke-width="1.1"/><path d="M1759 1054.4 Q1761 1057.4 1759 1060.6 M1762 1052 Q1765.4 1057.4 1762 1063" stroke-width="1.1" opacity=".7"/></svg>
<svg style="left:0;top:0" width="1" height="1"><circle cx="1705" cy="1063.4" r="4.4" fill="#3a8ee8"/></svg>
<svg style="left:0;top:0" width="1" height="1"><path d="M1870.8 1046.8 H1891 V1064 H1884 L1881 1067 V1064 H1870.8Z" fill="#fff"/><path d="M1875 1051.2 H1887 M1875 1055.2 H1887 M1875 1059.2 H1883" stroke="#4a2029" stroke-width="1.1"/><circle cx="1890.4" cy="1066.8" r="9.8" fill="#3a2a2e" stroke="#9c8a8f" stroke-width="1"/><path d="M1890.4 1066.8 L1881.2 1063.4 A9.8 9.8 0 0 1 1890.4 1057 Z" fill="#8a8084" opacity=".85"/></svg>
<!-- text labels -->
<span class="t" style="left:63.3px;top:26px;font-size:13px;letter-spacing:-0.44px;color:#242424;">AutoSave</span>
<span class="t" style="left:134.5px;top:27px;font-size:12.5px;letter-spacing:-0.69px;color:#fff;">On</span>
<span class="t" style="left:393.0px;top:26px;font-size:14.5px;letter-spacing:0.01px;color:#242424;">Q1 Budget analysis</span>
<span class="t" style="left:555.6px;top:26px;font-size:14.5px;color:#242424;">•</span>
<span class="t" style="left:567.6px;top:26px;font-size:14.5px;letter-spacing:-0.48px;color:#242424;">Saved</span>
<span class="t" style="left:794.0px;top:24px;font-size:17px;letter-spacing:-0.57px;color:#616161;">Search</span>
<span class="t" style="left:29.0px;top:75px;font-size:16.6px;letter-spacing:-0.58px;color:#242424;">File</span>
<span class="t" style="left:86.0px;top:75px;font-size:16.6px;letter-spacing:0.91px;color:#242424;-webkit-text-stroke:0.55px #242424;">Home</span>
<span class="t" style="left:156.0px;top:75px;font-size:16.6px;letter-spacing:0.30px;color:#242424;">Insert</span>
<span class="t" style="left:222.0px;top:75px;font-size:16.6px;letter-spacing:0.09px;color:#242424;">Draw</span>
<span class="t" style="left:285.0px;top:75px;font-size:16.6px;letter-spacing:-0.13px;color:#242424;">Design</span>
<span class="t" style="left:360.0px;top:75px;font-size:16.6px;letter-spacing:0.05px;color:#242424;">Transitions</span>
<span class="t" style="left:464.0px;top:75px;font-size:16.6px;letter-spacing:0.43px;color:#242424;">Animations</span>
<span class="t" style="left:573.0px;top:75px;font-size:16.6px;letter-spacing:-0.11px;color:#242424;">Slide Show</span>
<span class="t" style="left:679.0px;top:75px;font-size:16.6px;letter-spacing:-0.30px;color:#242424;">Record</span>
<span class="t" style="left:757.0px;top:75px;font-size:16.6px;letter-spacing:-0.48px;color:#242424;">Review</span>
<span class="t" style="left:834.0px;top:75px;font-size:16.6px;letter-spacing:0.11px;color:#242424;">View</span>
<span class="t" style="left:894.0px;top:75px;font-size:16.6px;letter-spacing:0.29px;color:#242424;">Help</span>
<span class="t" style="left:1538.0px;top:74px;font-size:16.6px;letter-spacing:-0.30px;color:#242424;">Record</span>
<span class="t" style="left:1635.0px;top:74px;font-size:16.6px;letter-spacing:0.01px;color:#242424;">Present in Teams</span>
<span class="t" style="left:1844.0px;top:74px;font-size:16.6px;letter-spacing:-0.57px;color:#fff;">Share</span>
<span class="t" style="left:36.0px;top:155px;font-size:14px;letter-spacing:-0.45px;color:#242424;">Paste</span>
<span class="t" style="left:172.8px;top:154px;font-size:14px;letter-spacing:0.39px;color:#242424;">New</span>
<span class="t" style="left:163.4px;top:173px;font-size:14px;letter-spacing:0.51px;color:#242424;">Slide</span>
<span class="t" style="left:221.0px;top:154px;font-size:14px;letter-spacing:-0.37px;color:#242424;">Reuse</span>
<span class="t" style="left:221.0px;top:173px;font-size:14px;letter-spacing:0.17px;color:#242424;">Slides</span>
<span class="t" style="left:299.5px;top:113px;font-size:14px;letter-spacing:0.29px;color:#242424;">Layout</span>
<span class="t" style="left:299.5px;top:145px;font-size:14px;letter-spacing:-0.27px;color:#242424;">Reset</span>
<span class="t" style="left:299.5px;top:177px;font-size:14px;letter-spacing:0.30px;color:#242424;">Section</span>
<span class="t" style="left:1070.5px;top:154px;font-size:14px;letter-spacing:-0.24px;color:#242424;">Shapes</span>
<span class="t" style="left:1124.5px;top:154px;font-size:14px;letter-spacing:0.36px;color:#242424;">Arrange</span>
<span class="t" style="left:1192.6px;top:154px;font-size:14px;letter-spacing:0.20px;color:#ababab;">Quick</span>
<span class="t" style="left:1184.8px;top:173px;font-size:14px;letter-spacing:-0.28px;color:#ababab;">Styles</span>
<span class="t" style="left:1271.5px;top:113px;font-size:14px;letter-spacing:0.03px;color:#ababab;">Shape Fill</span>
<span class="t" style="left:1271.5px;top:145px;font-size:14px;letter-spacing:0.27px;color:#ababab;">Shape Outline</span>
<span class="t" style="left:1271.5px;top:177px;font-size:14px;letter-spacing:0.13px;color:#ababab;">Shape Effects</span>
<span class="t" style="left:1435.5px;top:113px;font-size:14px;letter-spacing:0.22px;color:#242424;">Find and Replace</span>
<span class="t" style="left:1435.5px;top:145px;font-size:14px;letter-spacing:0.10px;color:#242424;">Replace Fonts</span>
<span class="t" style="left:1435.5px;top:177px;font-size:14px;letter-spacing:0.02px;color:#242424;">Select</span>
<span class="t" style="left:1582.0px;top:155px;font-size:14px;letter-spacing:0.57px;color:#242424;">Dictate</span>
<span class="t" style="left:1655.0px;top:154px;font-size:14px;letter-spacing:0.59px;color:#242424;">Add-ins</span>
<span class="t" style="left:1733.0px;top:154px;font-size:14px;letter-spacing:0.21px;color:#242424;">Designer</span>
<span class="t" style="left:44.0px;top:207px;font-size:12.6px;letter-spacing:0.39px;color:#444;">Clipboard</span>
<span class="t" style="left:249.0px;top:207px;font-size:12.6px;letter-spacing:-0.06px;color:#444;">Slides</span>
<span class="t" style="left:553.0px;top:207px;font-size:12.6px;letter-spacing:-0.07px;color:#444;">Font</span>
<span class="t" style="left:873.0px;top:207px;font-size:12.6px;letter-spacing:0.27px;color:#444;">Paragraph</span>
<span class="t" style="left:1192.5px;top:207px;font-size:12.6px;letter-spacing:0.13px;color:#444;">Drawing</span>
<span class="t" style="left:1462.0px;top:207px;font-size:12.6px;letter-spacing:0.16px;color:#444;">Editing</span>
<span class="t" style="left:1590.0px;top:207px;font-size:12.6px;letter-spacing:-0.20px;color:#444;">Voice</span>
<span class="t" style="left:1658.0px;top:207px;font-size:12.6px;letter-spacing:0.38px;color:#444;">Add-ins</span>
<span class="t" style="left:403.8px;top:160px;font-size:17.5px;color:#9c9c9c;font-weight:700;">B</span>
<span class="t" style="left:436.5px;top:159px;font-size:18px;color:#9c9c9c;font-style:italic;font-family:Liberation Serif,serif;">I</span>
<span class="t" style="left:466.3px;top:160px;font-size:17px;color:#9c9c9c;text-decoration:underline;text-underline-offset:2.4px;text-decoration-thickness:1.3px;">U</span>
<span class="t" style="left:498.4px;top:160px;font-size:17.5px;color:#9c9c9c;text-shadow:1px 1px 0 #d4d4d4;">S</span>
<span class="t" style="left:527.6px;top:162px;font-size:15.5px;letter-spacing:-0.35px;color:#9c9c9c;">ab</span>
<span class="t" style="left:558.2px;top:157px;font-size:15.4px;letter-spacing:0.41px;color:#9c9c9c;">AV</span>
<span class="t" style="left:610.7px;top:161px;font-size:16.3px;letter-spacing:-0.02px;color:#9c9c9c;">Aa</span>
<span class="t" style="left:668.6px;top:117px;font-size:22.3px;color:#9c9c9c;">A</span>
<span class="t" style="left:702.8px;top:121px;font-size:17.2px;color:#9c9c9c;">A</span>
<span class="t" style="left:734.0px;top:117px;font-size:22.3px;color:#9c9c9c;">A</span>
<span class="t" style="left:720.0px;top:158px;font-size:17.9px;color:#9c9c9c;">A</span>
<span class="t" style="left:836.0px;top:118px;font-size:6.5px;color:#9c9c9c;">1</span>
<span class="t" style="left:836.0px;top:126px;font-size:6.5px;color:#9c9c9c;">2</span>
<span class="t" style="left:836.0px;top:133px;font-size:6.5px;color:#9c9c9c;">3</span>
<span class="t" style="left:1013.4px;top:109px;font-size:11.5px;color:#9c9c9c;">A</span>
<span class="t" style="left:17.2px;top:245px;font-size:17px;color:#444;">1</span>
<span class="t" style="left:17.0px;top:440px;font-size:17px;color:#444;">2</span>
<span class="t" style="left:17.0px;top:633px;font-size:17px;color:#c43e1c;">3</span>
<span class="t" style="left:67.8px;top:279px;font-size:10.7px;letter-spacing:0.21px;color:#fff;">Q1 Budget Analysis</span>
<span class="t" style="left:69.6px;top:387px;font-size:4.9px;letter-spacing:0.16px;color:#fff;">Review and analysis by region for Q1 2024</span>
<span class="t" style="left:82.3px;top:457px;font-size:10.5px;letter-spacing:0.27px;color:#fff;">September sales forecast by region</span>
<span class="t" style="left:65.7px;top:562px;font-size:8.8px;letter-spacing:-0.43px;color:#1c1c1c;">GREAT LAKES</span>
<span class="t" style="left:141.7px;top:562px;font-size:8.8px;letter-spacing:-0.29px;color:#1c1c1c;">MIDWEST</span>
<span class="t" style="left:201.8px;top:562px;font-size:8.8px;letter-spacing:-0.42px;color:#1c1c1c;">WEST COAST</span>
<span class="t" style="left:271.0px;top:562px;font-size:8.8px;letter-spacing:-0.42px;color:#1c1c1c;">EAST COAST</span>
<span class="t" style="left:69.5px;top:675px;font-size:9.4px;letter-spacing:-0.38px;color:#1a1a1a;">Great Lakes Region</span>
<span class="t" style="left:70.0px;top:689px;font-size:4px;color:#444;">•</span>
<span class="t" style="left:76.4px;top:689px;font-size:4.4px;letter-spacing:0.01px;color:#3a3a3a;">Area 1</span>
<span class="t" style="left:70.0px;top:697px;font-size:4px;color:#444;">•</span>
<span class="t" style="left:76.4px;top:697px;font-size:4.4px;letter-spacing:0.01px;color:#3a3a3a;">Area 2</span>
<span class="t" style="left:70.0px;top:707px;font-size:4px;color:#444;">•</span>
<span class="t" style="left:76.4px;top:707px;font-size:4.4px;letter-spacing:0.01px;color:#3a3a3a;">Area 3</span>
<span class="t" style="left:70.0px;top:715px;font-size:4px;color:#444;">•</span>
<span class="t" style="left:76.4px;top:715px;font-size:4.4px;letter-spacing:0.01px;color:#3a3a3a;">Area 4</span>
<span class="t" style="left:70.0px;top:723px;font-size:4px;color:#444;">•</span>
<span class="t" style="left:76.4px;top:723px;font-size:4.4px;letter-spacing:0.23px;color:#3a3a3a;">Other areas</span>
<span class="t" style="left:470.3px;top:430px;font-size:31.7px;letter-spacing:-0.44px;color:#0d0d0d;">Great Lakes Region</span>
<span class="t" style="left:469.6px;top:476px;font-size:16px;color:#111;">•</span>
<span class="t" style="left:494.8px;top:476px;font-size:15.6px;letter-spacing:0.05px;color:#111;">Area 1</span>
<span class="t" style="left:469.6px;top:506px;font-size:16px;color:#111;">•</span>
<span class="t" style="left:494.8px;top:507px;font-size:15.6px;letter-spacing:0.05px;color:#111;">Area 2</span>
<span class="t" style="left:469.6px;top:537px;font-size:16px;color:#111;">•</span>
<span class="t" style="left:494.8px;top:537px;font-size:15.6px;letter-spacing:0.05px;color:#111;">Area 3</span>
<span class="t" style="left:469.6px;top:567px;font-size:16px;color:#111;">•</span>
<span class="t" style="left:494.8px;top:567px;font-size:15.6px;letter-spacing:0.05px;color:#111;">Area 4</span>
<span class="t" style="left:469.6px;top:597px;font-size:16px;color:#111;">•</span>
<span class="t" style="left:494.8px;top:598px;font-size:15.6px;letter-spacing:0.71px;color:#111;">Other areas</span>
<span class="t" style="left:386.5px;top:974px;font-size:17.4px;letter-spacing:0.40px;color:#505050;">Click to add notes</span>
<span class="t" style="left:1504.0px;top:243px;font-size:18px;letter-spacing:-0.36px;color:#242424;font-weight:700;">Designer</span>
<span class="t" style="left:1538.4px;top:327px;font-size:16.9px;letter-spacing:0.21px;color:#111;">Great Lakes</span>
<span class="t" style="left:1538.4px;top:347px;font-size:16.9px;letter-spacing:-0.03px;color:#111;">Region</span>
<span class="t" style="left:1539.6px;top:387px;font-size:6.5px;color:#333;">•</span>
<span class="t" style="left:1546.3px;top:387px;font-size:6.9px;letter-spacing:0.16px;color:#1f1f1f;">Area 1</span>
<span class="t" style="left:1539.6px;top:400px;font-size:6.5px;color:#333;">•</span>
<span class="t" style="left:1546.3px;top:400px;font-size:6.9px;letter-spacing:0.16px;color:#1f1f1f;">Area 2</span>
<span class="t" style="left:1539.6px;top:412px;font-size:6.5px;color:#333;">•</span>
<span class="t" style="left:1546.3px;top:412px;font-size:6.9px;letter-spacing:0.16px;color:#1f1f1f;">Area 3</span>
<span class="t" style="left:1539.6px;top:423px;font-size:6.5px;color:#333;">•</span>
<span class="t" style="left:1546.3px;top:424px;font-size:6.9px;letter-spacing:0.16px;color:#1f1f1f;">Area 4</span>
<span class="t" style="left:1539.6px;top:435px;font-size:6.5px;color:#333;">•</span>
<span class="t" style="left:1546.3px;top:436px;font-size:6.9px;letter-spacing:0.43px;color:#1f1f1f;">Other areas</span>
<span class="t" style="left:1711.4px;top:555px;font-size:17.4px;letter-spacing:0.24px;color:#111;">Great Lakes</span>
<span class="t" style="left:1711.4px;top:576px;font-size:17.4px;letter-spacing:-0.07px;color:#111;">Region</span>
<span class="t" style="left:1712.2px;top:615px;font-size:5.5px;color:#555;">•</span>
<span class="t" style="left:1719.2px;top:614px;font-size:6.4px;letter-spacing:0.07px;color:#3c3c3c;">Area 1</span>
<span class="t" style="left:1712.2px;top:626px;font-size:5.5px;color:#555;">•</span>
<span class="t" style="left:1719.2px;top:625px;font-size:6.4px;letter-spacing:0.07px;color:#3c3c3c;">Area 2</span>
<span class="t" style="left:1712.2px;top:638px;font-size:5.5px;color:#555;">•</span>
<span class="t" style="left:1719.2px;top:637px;font-size:6.4px;letter-spacing:0.07px;color:#3c3c3c;">Area 3</span>
<span class="t" style="left:1712.2px;top:649px;font-size:5.5px;color:#555;">•</span>
<span class="t" style="left:1719.2px;top:648px;font-size:6.4px;letter-spacing:0.07px;color:#3c3c3c;">Area 4</span>
<span class="t" style="left:1712.2px;top:660px;font-size:5.5px;color:#555;">•</span>
<span class="t" style="left:1719.2px;top:659px;font-size:6.4px;letter-spacing:0.30px;color:#3c3c3c;">Other areas</span>
<span class="t" style="left:1544.0px;top:779px;font-size:14.7px;letter-spacing:-0.40px;color:#111;">Great Lakes Region</span>
<span class="t" style="left:1544.8px;top:820px;font-size:5.5px;color:#555;">•</span>
<span class="t" style="left:1552.0px;top:819px;font-size:6.4px;letter-spacing:0.07px;color:#3c3c3c;">Area 1</span>
<span class="t" style="left:1544.8px;top:831px;font-size:5.5px;color:#555;">•</span>
<span class="t" style="left:1552.0px;top:830px;font-size:6.4px;letter-spacing:0.07px;color:#3c3c3c;">Area 2</span>
<span class="t" style="left:1544.8px;top:844px;font-size:5.5px;color:#555;">•</span>
<span class="t" style="left:1552.0px;top:843px;font-size:6.4px;letter-spacing:0.07px;color:#3c3c3c;">Area 3</span>
<span class="t" style="left:1544.8px;top:855px;font-size:5.5px;color:#555;">•</span>
<span class="t" style="left:1552.0px;top:854px;font-size:6.4px;letter-spacing:0.07px;color:#3c3c3c;">Area 4</span>
<span class="t" style="left:1544.8px;top:866px;font-size:5.5px;color:#555;">•</span>
<span class="t" style="left:1552.0px;top:865px;font-size:6.4px;letter-spacing:0.30px;color:#3c3c3c;">Other areas</span>
<span class="t" style="left:17.2px;top:1013px;font-size:13px;letter-spacing:0.03px;color:#444;">Slide 3 of 3</span>
<span class="t" style="left:169.0px;top:1013px;font-size:13px;letter-spacing:-0.13px;color:#242424;font-weight:700;">Accessibility: Investigate</span>
<span class="t" style="left:1418.0px;top:1013px;font-size:13.4px;letter-spacing:-0.05px;color:#333;">Notes</span>
<span class="t" style="left:1857.0px;top:1014px;font-size:12.6px;letter-spacing:-0.41px;color:#444;">67%</span>
<span class="t" style="left:112.9px;top:1049px;font-size:18.2px;letter-spacing:0.11px;color:#2b2b2b;">Type here to search</span>
<span class="t" style="left:1497.0px;top:1048px;font-size:19px;letter-spacing:-2.11px;color:#fff;">36°F</span>
<span class="t" style="left:1542.0px;top:1048px;font-size:19px;letter-spacing:-0.73px;color:#fff;">Cloudy</span>
<span class="t" style="left:1788.1px;top:1039px;font-size:14.3px;letter-spacing:-0.31px;color:#fff;">6:24 PM</span>
<span class="t" style="left:1784.3px;top:1062px;font-size:14.3px;letter-spacing:0.48px;color:#fff;">2/8/2025</span>
<span class="t" style="left:1886.7px;top:1062px;font-size:12.5px;color:#fff;font-weight:700;">2</span>
</div></div>
</body></html>
